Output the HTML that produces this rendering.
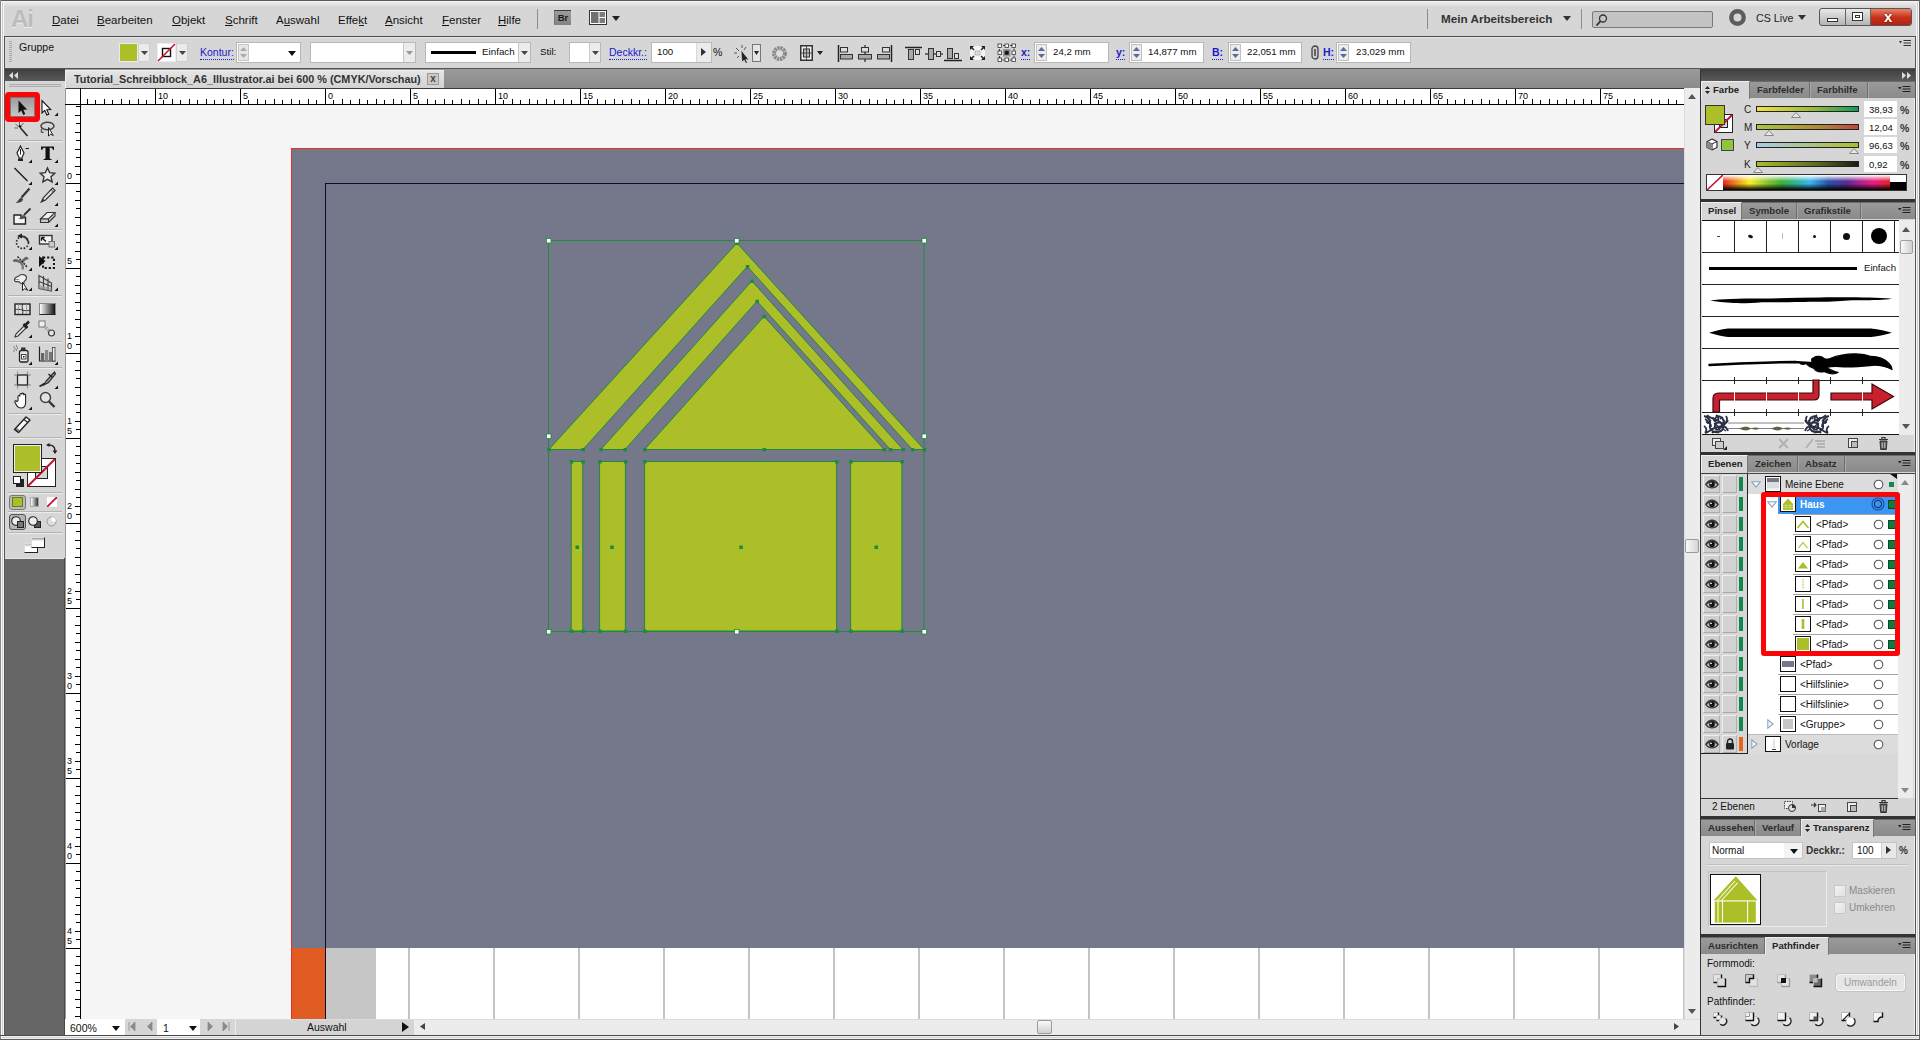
<!DOCTYPE html><html lang="de"><head><meta charset="utf-8"><title>Adobe Illustrator</title><style>
*{box-sizing:border-box;margin:0;padding:0}
html,body{width:1920px;height:1040px;overflow:hidden;background:#d6d6d6;font-family:"Liberation Sans",sans-serif;font-size:11px;color:#111}
#app{position:relative;width:1920px;height:1040px;overflow:hidden;background:#d6d6d6}
#app div,#app svg,#app span.a{position:absolute}
.t{white-space:nowrap;line-height:14px;font-size:11px;color:#111}
.m{white-space:nowrap;line-height:16px;font-size:11.5px;color:#111}
.fl::first-letter{text-decoration:underline;text-underline-offset:1px}
.tab{white-space:nowrap;line-height:14px;font-size:9.6px;font-weight:bold;color:#333}
.lnk{white-space:nowrap;line-height:14px;font-size:10.5px;color:#1a1ad0;border-bottom:1px dotted #1a1ad0}
.wb{background:#fff;border:1px solid #b8b8b8}
.r{font-size:9px;line-height:10px;color:#000;white-space:nowrap}
</style></head><body>
<div id="app">
<div style="left:0px;top:0px;width:1920px;height:1px;background:#5a5a5a"></div>
<div style="left:0px;top:1px;width:1920px;height:1px;background:#f2f2f2"></div>
<div style="left:0px;top:0px;width:1px;height:1040px;background:#8a8a8a"></div>
<div style="left:1px;top:1px;width:1px;height:1039px;background:#fafafa"></div>
<div style="left:2px;top:2px;width:1px;height:1038px;background:#cdcdcd"></div>
<div style="left:3px;top:2px;width:1px;height:1038px;background:#f6f6f6"></div>
<div style="left:4px;top:36px;width:1912px;height:1px;background:#4a4a4a"></div>
<div style="left:4px;top:36px;width:1px;height:1000px;background:#555"></div>
<div style="left:1915px;top:36px;width:1px;height:1000px;background:#555"></div>
<div style="left:1914px;top:37px;width:1px;height:998px;background:#f0f0f0"></div>
<div style="left:1916px;top:2px;width:1px;height:1038px;background:#f6f6f6"></div>
<div style="left:1917px;top:2px;width:1px;height:1038px;background:#cdcdcd"></div>
<div style="left:1918px;top:1px;width:1px;height:1039px;background:#fafafa"></div>
<div style="left:1919px;top:0px;width:1px;height:1040px;background:#666"></div>
<div style="left:0px;top:1035px;width:1920px;height:1px;background:#4a4a4a"></div>
<div style="left:1px;top:1036px;width:1918px;height:3px;background:#f0f0f0"></div>
<div style="left:2px;top:1037px;width:1916px;height:1px;background:#d4d4d4"></div>
<div style="left:0px;top:1039px;width:1920px;height:1px;background:#5a5a5a"></div>
<div style="left:4px;top:2px;width:1912px;height:5px;background:linear-gradient(#ececec,#d6d6d6)"></div>
<div class="t" style="left:11px;top:7px;font-size:24px;line-height:24px;font-weight:bold;color:#bcbcbc;letter-spacing:-1px;text-shadow:0 1px 0 #eee">Ai</div>
<div class="m fl" style="left:52px;top:12px;">Datei</div>
<div class="m fl" style="left:97px;top:12px;">Bearbeiten</div>
<div class="m fl" style="left:172px;top:12px;">Objekt</div>
<div class="m fl" style="left:225px;top:12px;">Schrift</div>
<div class="m" style="left:276px;top:12px;">Auswahl</div>
<div style="left:283.7px;top:25px;width:6.4px;height:1px;background:#222"></div>
<div class="m" style="left:338px;top:12px;">Effekt</div>
<div style="left:358.5px;top:25px;width:5.8px;height:1px;background:#222"></div>
<div class="m fl" style="left:385px;top:12px;">Ansicht</div>
<div class="m fl" style="left:442px;top:12px;">Fenster</div>
<div class="m fl" style="left:498px;top:12px;">Hilfe</div>
<div style="left:537px;top:9px;width:1px;height:20px;background:#8c8c8c"></div>
<div style="left:554px;top:10px;width:17px;height:15px;background:linear-gradient(#9c9c9c,#828282);border-top:1px solid #3a3a3a;border-left:1px solid #777;color:#1a1a1a;font-size:9.5px;font-weight:bold;line-height:13px;text-align:center">Br</div>
<svg style="left:589px;top:10px" width="18" height="15" viewBox="0 0 18 15"><rect x="0.5" y="0.5" width="17" height="14" fill="#fff" stroke="#333"/><rect x="2" y="2" width="7.5" height="11" fill="#707070"/><rect x="10.5" y="2" width="5.5" height="5" fill="#7c7c7c"/><rect x="10.5" y="8" width="5.5" height="5" fill="#7c7c7c"/></svg>
<svg style="left:612px;top:16px" width="8" height="5"><path d="M0 0h8l-4 5z" fill="#222"/></svg>
<div style="left:1427px;top:9px;width:1px;height:20px;background:#8c8c8c"></div>
<div class="t" style="left:1441px;top:11px;font-weight:bold;font-size:11.7px;color:#333;line-height:16px">Mein Arbeitsbereich</div>
<svg style="left:1563px;top:16px" width="8" height="5"><path d="M0 0h8l-4 5z" fill="#333"/></svg>
<div style="left:1581px;top:9px;width:1px;height:20px;background:#8c8c8c"></div>
<div style="left:1592px;top:11px;width:121px;height:17px;background:#c4c4c4;border:1px solid #7a7a7a;border-radius:2px"></div>
<svg style="left:1595px;top:13px" width="14" height="14" viewBox="0 0 14 14"><circle cx="8" cy="5.5" r="3.5" fill="none" stroke="#333" stroke-width="1.3"/><path d="M5.5 8.2L1.5 12.5" stroke="#333" stroke-width="1.8"/></svg>
<svg style="left:1727px;top:7px" width="21" height="21" viewBox="0 0 21 21"><circle cx="10.5" cy="10.5" r="6.2" fill="none" stroke="#5c5c5c" stroke-width="4.4"/></svg>
<div class="t" style="left:1756px;top:10px;font-size:10.7px;line-height:16px;color:#222">CS Live</div>
<svg style="left:1798px;top:15px" width="8" height="5"><path d="M0 0h8l-4 5z" fill="#333"/></svg>
<div style="left:1819px;top:8px;width:93px;height:18px;border:1px solid #555;border-radius:3px;background:linear-gradient(#e8e8e8,#b4b4b4);overflow:hidden">
<div style="left:25px;top:0px;width:1px;height:18px;background:#666"></div>
<div style="left:50px;top:0px;width:1px;height:18px;background:#666"></div>
<div style="left:51px;top:0px;width:41px;height:17px;background:linear-gradient(#e8836a,#c9301a 50%,#b02010)"></div>
<div style="left:7px;top:9px;width:11px;height:4px;background:#fff;border:1px solid #333"></div>
<div style="left:32px;top:3px;width:11px;height:9px;background:#fff;border:1px solid #333">
<div style="left:2px;top:2px;width:5px;height:3px;border:1px solid #333"></div></div>
<div class="t" style="left:64px;top:1px;font-weight:bold;font-size:15px;line-height:13px;color:#fff;text-shadow:0 0 2px #400">x</div></div>
<div style="left:5px;top:37px;width:1910px;height:32px;background:#d6d6d6"></div>
<div style="left:5px;top:37px;width:1910px;height:1px;background:#e8e8e8"></div>
<div style="left:9px;top:41px;width:3px;height:22px;background:repeating-linear-gradient(#a8a8a8 0 1px,transparent 1px 2px)"></div>
<div class="t" style="left:19px;top:40px;font-size:10.5px">Gruppe</div>
<div style="left:119px;top:43px;width:19px;height:19px;background:#acbe28;border:1px solid #ececec"></div>
<div style="left:138px;top:43px;width:12px;height:19px;background:#ebebeb;border:1px solid #cfcfcf"></div>
<svg style="left:141px;top:51px" width="7" height="4"><path d="M0 0h7l-3.5 4z" fill="#444"/></svg>
<div style="left:157px;top:43px;width:19px;height:19px;background:#fff;border:1px solid #ececec"></div>
<svg style="left:157px;top:43px" width="19" height="19" viewBox="0 0 19 19"><rect x="5.5" y="5.5" width="8" height="8" fill="#fff" stroke="#111" stroke-width="1.4"/><path d="M1 18L18 1" stroke="#d01030" stroke-width="1.6"/></svg>
<div style="left:176px;top:43px;width:12px;height:19px;background:#ebebeb;border:1px solid #cfcfcf"></div>
<svg style="left:179px;top:51px" width="7" height="4"><path d="M0 0h7l-3.5 4z" fill="#444"/></svg>
<div class="lnk" style="left:200px;top:45px;">Kontur:</div>
<div class="wb" style="left:236px;top:42px;width:65px;height:21px;"></div>
<div style="left:238px;top:44px;width:11px;height:17px;background:#e6e6e6;border:1px solid #c6c6c6"></div>
<svg style="left:240px;top:46px" width="7" height="13"><path d="M0 5h7l-3.5-4z M0 8h7l-3.5 4z" fill="#aaa"/></svg>
<svg style="left:288px;top:51px" width="8" height="5"><path d="M0 0h8l-4 5z" fill="#111"/></svg>
<div class="wb" style="left:310px;top:42px;width:106px;height:21px;"></div>
<div style="left:403px;top:43px;width:12px;height:19px;background:#ececec;border-left:1px solid #c8c8c8"></div>
<svg style="left:406px;top:51px" width="7" height="4"><path d="M0 0h7l-3.5 4z" fill="#999"/></svg>
<div class="wb" style="left:425px;top:42px;width:106px;height:21px;"></div>
<div style="left:431px;top:51px;width:45px;height:3px;background:#000"></div>
<div class="t" style="left:482px;top:45px;font-size:9.8px">Einfach</div>
<div style="left:518px;top:43px;width:12px;height:19px;background:#ececec;border-left:1px solid #c8c8c8"></div>
<svg style="left:521px;top:51px" width="7" height="4"><path d="M0 0h7l-3.5 4z" fill="#444"/></svg>
<div class="t" style="left:540px;top:45px;font-size:9.8px">Stil:</div>
<div class="wb" style="left:569px;top:42px;width:32px;height:21px;"></div>
<div style="left:589px;top:43px;width:11px;height:19px;background:#ececec;border-left:1px solid #c8c8c8"></div>
<svg style="left:592px;top:51px" width="7" height="4"><path d="M0 0h7l-3.5 4z" fill="#444"/></svg>
<div class="lnk" style="left:609px;top:45px;">Deckkr.:</div>
<div class="wb" style="left:651px;top:42px;width:61px;height:21px;"></div>
<div class="t" style="left:657px;top:45px;font-size:9.7px">100</div>
<div style="left:696px;top:43px;width:15px;height:19px;background:#ececec;border-left:1px solid #d8d8d8"></div>
<svg style="left:701px;top:48px" width="5" height="8"><path d="M0 0v8l5-4z" fill="#333"/></svg>
<div class="t" style="left:713px;top:45px;font-size:10.5px">%</div>
<svg style="left:733px;top:44px" width="30" height="19" viewBox="0 0 30 19"><g stroke="#555" stroke-width="1"><path d="M3 4l3 3M9 1v3M13 3l-2 3M1 9h3M4 14l2-2"/></g><path d="M8 6l8 10-3.2-.6 1.6 3.4-1.6.6-1.6-3.3-2.2 2z" fill="#222" stroke="#eee" stroke-width=".5"/><rect x="19.500" y=".5" width="8" height="17" fill="#e4e4e4" stroke="#777"/><path d="M21 7h5l-2.500 4z" fill="#222"/></svg>
<svg style="left:771px;top:45px" width="17" height="17" viewBox="0 0 17 17"><circle cx="8.5" cy="8.5" r="5.500" fill="none" stroke="#8a8a8a" stroke-width="4" stroke-dasharray="2.2 0.7"/><circle cx="8.5" cy="8.500" r="3" fill="#dcdcdc"/></svg>
<svg style="left:800px;top:45px" width="26" height="16" viewBox="0 0 26 16"><rect x=".75" y=".75" width="11.5" height="14.500" fill="#eee" stroke="#333" stroke-width="1.500"/><rect x="3.500" y="4" width="6" height="8" fill="#bbb" stroke="#333"/><path d="M6.500 0v16M0 8h13" stroke="#333" stroke-width=".8"/><path d="M17 6h6l-3 4z" fill="#222"/></svg>
<svg style="left:837px;top:45px" width="16" height="17" viewBox="0 0 16 17"><path d="M1.500 0v17" stroke="#222" stroke-width="1.500"/><rect x="3.500" y="2.500" width="7" height="4.500" fill="#ddd" stroke="#333"/><rect x="3.500" y="9.500" width="12" height="4.500" fill="#aaa" stroke="#333"/></svg>
<svg style="left:858px;top:45px" width="16" height="17" viewBox="0 0 16 17"><path d="M7 0v17" stroke="#222" stroke-width="1.200"/><rect x="3.500" y="2.500" width="7" height="4.500" fill="#ddd" stroke="#333"/><rect x=".5" y="9.500" width="13" height="4.500" fill="#aaa" stroke="#333"/></svg>
<svg style="left:877px;top:45px" width="16" height="17" viewBox="0 0 16 17"><path d="M14.500 0v17" stroke="#222" stroke-width="1.500"/><rect x="5.500" y="2.500" width="7" height="4.500" fill="#ddd" stroke="#333"/><rect x=".5" y="9.500" width="12" height="4.500" fill="#aaa" stroke="#333"/></svg>
<svg style="left:905px;top:46px" width="18" height="16" viewBox="0 0 18 16"><path d="M0 1.500h17" stroke="#222" stroke-width="1.500"/><rect x="3.500" y="3.500" width="5" height="10" fill="#aaa" stroke="#333"/><rect x="10.500" y="3.500" width="4" height="5" fill="#ddd" stroke="#333"/></svg>
<svg style="left:925px;top:46px" width="18" height="16" viewBox="0 0 18 16"><path d="M0 8h18" stroke="#222" stroke-width="1.200"/><rect x="3.500" y="2.500" width="5" height="11" fill="#aaa" stroke="#333"/><rect x="11.500" y="5.500" width="4" height="5" fill="#ddd" stroke="#333"/></svg>
<svg style="left:944px;top:46px" width="18" height="16" viewBox="0 0 18 16"><path d="M0 14.500h18" stroke="#222" stroke-width="1.500"/><rect x="3.500" y="2.500" width="5" height="10" fill="#aaa" stroke="#333"/><rect x="10.500" y="7.500" width="4" height="5" fill="#ddd" stroke="#333"/></svg>
<svg style="left:970px;top:46px" width="15" height="14" viewBox="0 0 15 14"><rect width="15" height="14" fill="#f4f4f4"/><path d="M0 0h4l-1.500 1.500 2 2-1 1-2-2L0 4zM15 0v4l-1.500-1.500-2 2-1-1 2-2L11 0zM0 14v-4l1.500 1.500 2-2 1 1-2 2L4 14zM15 14h-4l1.500-1.500-2-2 1-1 2 2L15 10z" fill="#222"/><rect x="5" y="5" width="5" height="4" fill="#ddd" stroke="#999" stroke-width=".6"/></svg>
<svg style="left:997px;top:43px" width="20" height="20" viewBox="0 0 20 20"><rect x="2.500" y="2.500" width="14.500" height="14.500" fill="none" stroke="#333" stroke-dasharray="2 1.500"/><rect x="6" y="6" width="7.500" height="7.500" fill="#999"/><rect x="1" y="1" width="3.500" height="3.500" fill="#fff" stroke="#333" stroke-width=".8"/><rect x="1" y="8" width="3.500" height="3.500" fill="#fff" stroke="#333" stroke-width=".8"/><rect x="1" y="15" width="3.500" height="3.500" fill="#fff" stroke="#333" stroke-width=".8"/><rect x="8" y="1" width="3.500" height="3.500" fill="#fff" stroke="#333" stroke-width=".8"/><rect x="8" y="8" width="3.500" height="3.500" fill="#111" stroke="#333" stroke-width=".8"/><rect x="8" y="15" width="3.500" height="3.500" fill="#fff" stroke="#333" stroke-width=".8"/><rect x="15" y="1" width="3.500" height="3.500" fill="#fff" stroke="#333" stroke-width=".8"/><rect x="15" y="8" width="3.500" height="3.500" fill="#fff" stroke="#333" stroke-width=".8"/><rect x="15" y="15" width="3.500" height="3.500" fill="#fff" stroke="#333" stroke-width=".8"/></svg>
<div class="lnk" style="left:1021px;top:45px;font-weight:bold">x:</div>
<div class="wb" style="left:1034px;top:42px;width:75px;height:21px;"></div>
<div style="left:1036px;top:44px;width:11px;height:17px;background:#ececec;border:1px solid #c0c0c0"></div>
<svg style="left:1038px;top:46px" width="7" height="13"><path d="M0 5h7l-3.500-4z M0 8h7l-3.500 4z" fill="#5a6a9a"/></svg>
<div class="t" style="left:1053px;top:45px;font-size:9.7px">24,2 mm</div>
<div class="lnk" style="left:1116px;top:45px;font-weight:bold">y:</div>
<div class="wb" style="left:1129px;top:42px;width:75px;height:21px;"></div>
<div style="left:1131px;top:44px;width:11px;height:17px;background:#ececec;border:1px solid #c0c0c0"></div>
<svg style="left:1133px;top:46px" width="7" height="13"><path d="M0 5h7l-3.500-4z M0 8h7l-3.500 4z" fill="#5a6a9a"/></svg>
<div class="t" style="left:1148px;top:45px;font-size:9.7px">14,877 mm</div>
<div class="lnk" style="left:1212px;top:45px;font-weight:bold">B:</div>
<div class="wb" style="left:1228px;top:42px;width:74px;height:21px;"></div>
<div style="left:1230px;top:44px;width:11px;height:17px;background:#ececec;border:1px solid #c0c0c0"></div>
<svg style="left:1232px;top:46px" width="7" height="13"><path d="M0 5h7l-3.500-4z M0 8h7l-3.500 4z" fill="#5a6a9a"/></svg>
<div class="t" style="left:1247px;top:45px;font-size:9.7px">22,051 mm</div>
<svg style="left:1311px;top:45px" width="8" height="15" viewBox="0 0 8 15"><rect x="1" y="1" width="6" height="13" rx="3" fill="#ccc" stroke="#444" stroke-width="1.300"/><path d="M4 4v7" stroke="#444" stroke-width="1.500"/></svg>
<div class="lnk" style="left:1323px;top:45px;font-weight:bold">H:</div>
<div class="wb" style="left:1336px;top:42px;width:75px;height:21px;"></div>
<div style="left:1338px;top:44px;width:11px;height:17px;background:#ececec;border:1px solid #c0c0c0"></div>
<svg style="left:1340px;top:46px" width="7" height="13"><path d="M0 5h7l-3.500-4z M0 8h7l-3.500 4z" fill="#5a6a9a"/></svg>
<div class="t" style="left:1356px;top:45px;font-size:9.7px">23,029 mm</div>
<svg style="left:1899px;top:40px" width="12" height="8" viewBox="0 0 12 8"><path d="M0 1h3l-1.500 2.500z" fill="#333"/><path d="M4.500 .5h7.500M4.500 3h7.500M4.500 5.500h7.500" stroke="#333" stroke-width="1"/></svg>
<div style="left:5px;top:68px;width:1910px;height:21px;background:linear-gradient(#9a9a9a,#8a8a8a);border-top:1px solid #555;border-bottom:1px solid #3a3a3a"></div>
<div style="left:5px;top:69px;width:60px;height:12px;background:linear-gradient(#3e3e3e,#5a5a5a)"></div>
<svg style="left:9px;top:72px" width="9" height="7"><path d="M4 0v7L0 3.500zM9 0v7L5 3.500z" fill="#ddd"/></svg>
<div style="left:65px;top:70px;width:379px;height:19px;background:linear-gradient(#e4e4e4,#d2d2d2);border-top:1px solid #f0f0f0;border-left:1px solid #f0f0f0"></div>
<div class="tab" style="left:74px;top:72px;font-size:10.85px">Tutorial_Schreibblock_A6_Illustrator.ai bei 600 % (CMYK/Vorschau)</div>
<div style="left:427px;top:73px;width:12px;height:12px;background:#c8c8c8;border:1px solid #9a9a9a;font-size:10px;line-height:9px;text-align:center;color:#444;font-weight:bold">x</div>
<div style="left:1700px;top:69px;width:215px;height:12px;background:linear-gradient(#3e3e3e,#5a5a5a)"></div>
<svg style="left:1902px;top:72px" width="9" height="7"><path d="M0 0v7l4-3.500zM5 0v7l4-3.500z" fill="#ddd"/></svg>
<div style="left:65px;top:88px;width:1619px;height:17px;background:#fff"></div>
<div style="left:65px;top:88px;width:16px;height:931px;background:#fff"></div>
<div style="left:65px;top:88px;width:1619px;height:1px;background:#3a3a3a"></div>
<div style="left:65px;top:88px;width:1px;height:931px;background:#9a9a9a"></div>
<svg style="left:65px;top:88px" width="1619" height="931" viewBox="65 88 1619 931" shape-rendering="crispEdges"><path d="M65 104.500H1684M80.500 88V1019" stroke="#000" stroke-width="1" fill="none"/><path d="M87.5 99V104M95.5 100V104M104.5 99V104M112.5 100V104M121.5 99V104M129.5 100V104M138.5 99V104M146.5 100V104M155.5 89V104M163.5 100V104M172.5 99V104M180.5 100V104M189.5 99V104M197.5 100V104M206.5 99V104M214.5 100V104M223.5 99V104M231.5 100V104M240.5 89V104M248.5 100V104M257.5 99V104M265.5 100V104M274.5 99V104M282.5 100V104M291.5 99V104M299.5 100V104M308.5 99V104M316.5 100V104M325.5 89V104M333.5 100V104M342.5 99V104M350.5 100V104M359.5 99V104M367.5 100V104M376.5 99V104M384.5 100V104M393.5 99V104M401.5 100V104M410.5 89V104M418.5 100V104M427.5 99V104M435.5 100V104M444.5 99V104M452.5 100V104M461.5 99V104M469.5 100V104M478.5 99V104M486.5 100V104M495.5 89V104M503.5 100V104M512.5 99V104M520.5 100V104M529.5 99V104M537.5 100V104M546.5 99V104M554.5 100V104M563.5 99V104M571.5 100V104M580.5 89V104M588.5 100V104M597.5 99V104M605.5 100V104M614.5 99V104M622.5 100V104M631.5 99V104M639.5 100V104M648.5 99V104M656.5 100V104M665.5 89V104M673.5 100V104M682.5 99V104M690.5 100V104M699.5 99V104M707.5 100V104M716.5 99V104M724.5 100V104M733.5 99V104M741.5 100V104M750.5 89V104M758.5 100V104M767.5 99V104M775.5 100V104M784.5 99V104M792.5 100V104M801.5 99V104M809.5 100V104M818.5 99V104M826.5 100V104M835.5 89V104M843.5 100V104M852.5 99V104M860.5 100V104M869.5 99V104M877.5 100V104M886.5 99V104M894.5 100V104M903.5 99V104M911.5 100V104M920.5 89V104M928.5 100V104M937.5 99V104M945.5 100V104M954.5 99V104M962.5 100V104M971.5 99V104M979.5 100V104M988.5 99V104M996.5 100V104M1005.5 89V104M1013.5 100V104M1022.5 99V104M1030.5 100V104M1039.5 99V104M1047.5 100V104M1056.5 99V104M1064.5 100V104M1073.5 99V104M1081.5 100V104M1090.5 89V104M1098.5 100V104M1107.5 99V104M1115.5 100V104M1124.5 99V104M1132.5 100V104M1141.5 99V104M1149.5 100V104M1158.5 99V104M1166.5 100V104M1175.5 89V104M1183.5 100V104M1192.5 99V104M1200.5 100V104M1209.5 99V104M1217.5 100V104M1226.5 99V104M1234.5 100V104M1243.5 99V104M1251.5 100V104M1260.5 89V104M1268.5 100V104M1277.5 99V104M1285.5 100V104M1294.5 99V104M1302.5 100V104M1311.5 99V104M1319.5 100V104M1328.5 99V104M1336.5 100V104M1345.5 89V104M1353.5 100V104M1362.5 99V104M1370.5 100V104M1379.5 99V104M1387.5 100V104M1396.5 99V104M1404.5 100V104M1413.5 99V104M1421.5 100V104M1430.5 89V104M1438.5 100V104M1447.5 99V104M1455.5 100V104M1464.5 99V104M1472.5 100V104M1481.5 99V104M1489.5 100V104M1498.5 99V104M1506.5 100V104M1515.5 89V104M1523.5 100V104M1532.5 99V104M1540.5 100V104M1549.5 99V104M1557.5 100V104M1566.5 99V104M1574.5 100V104M1583.5 99V104M1591.5 100V104M1600.5 89V104M1608.5 100V104M1617.5 99V104M1625.5 100V104M1634.5 99V104M1642.5 100V104M1651.5 99V104M1659.5 100V104M1668.5 99V104M1676.5 100V104M76 106.5H80M75 115.5H80M76 123.5H80M75 132.5H80M76 140.5H80M75 149.5H80M76 157.5H80M75 166.5H80M76 174.5H80M66 183.5H80M76 191.5H80M75 200.5H80M76 208.5H80M75 217.5H80M76 225.5H80M75 234.5H80M76 242.5H80M75 251.5H80M76 259.5H80M66 268.5H80M76 276.5H80M75 285.5H80M76 293.5H80M75 302.5H80M76 310.5H80M75 319.5H80M76 327.5H80M75 336.5H80M76 344.5H80M66 353.5H80M76 361.5H80M75 370.5H80M76 378.5H80M75 387.5H80M76 395.5H80M75 404.5H80M76 412.5H80M75 421.5H80M76 429.5H80M66 438.5H80M76 446.5H80M75 455.5H80M76 463.5H80M75 472.5H80M76 480.5H80M75 489.5H80M76 497.5H80M75 506.5H80M76 514.5H80M66 523.5H80M76 531.5H80M75 540.5H80M76 548.5H80M75 557.5H80M76 565.5H80M75 574.5H80M76 582.5H80M75 591.5H80M76 599.5H80M66 608.5H80M76 616.5H80M75 625.5H80M76 633.5H80M75 642.5H80M76 650.5H80M75 659.5H80M76 667.5H80M75 676.5H80M76 684.5H80M66 693.5H80M76 701.5H80M75 710.5H80M76 718.5H80M75 727.5H80M76 735.5H80M75 744.5H80M76 752.5H80M75 761.5H80M76 769.5H80M66 778.5H80M76 786.5H80M75 795.5H80M76 803.5H80M75 812.5H80M76 820.5H80M75 829.5H80M76 837.5H80M75 846.5H80M76 854.5H80M66 863.5H80M76 871.5H80M75 880.5H80M76 888.5H80M75 897.5H80M76 905.5H80M75 914.5H80M76 922.5H80M75 931.5H80M76 939.5H80M66 948.5H80M76 956.5H80M75 965.5H80M76 973.5H80M75 982.5H80M76 990.5H80M75 999.5H80M76 1007.5H80M75 1016.5H80" stroke="#000" stroke-width="1" fill="none"/></svg>
<div class="r" style="left:158px;top:91px;">10</div>
<div class="r" style="left:243px;top:91px;">5</div>
<div class="r" style="left:328px;top:91px;">0</div>
<div class="r" style="left:413px;top:91px;">5</div>
<div class="r" style="left:498px;top:91px;">10</div>
<div class="r" style="left:583px;top:91px;">15</div>
<div class="r" style="left:668px;top:91px;">20</div>
<div class="r" style="left:753px;top:91px;">25</div>
<div class="r" style="left:838px;top:91px;">30</div>
<div class="r" style="left:923px;top:91px;">35</div>
<div class="r" style="left:1008px;top:91px;">40</div>
<div class="r" style="left:1093px;top:91px;">45</div>
<div class="r" style="left:1178px;top:91px;">50</div>
<div class="r" style="left:1263px;top:91px;">55</div>
<div class="r" style="left:1348px;top:91px;">60</div>
<div class="r" style="left:1433px;top:91px;">65</div>
<div class="r" style="left:1518px;top:91px;">70</div>
<div class="r" style="left:1603px;top:91px;">75</div>
<div class="r" style="left:67px;top:171px;">0</div>
<div class="r" style="left:67px;top:256px;">5</div>
<div class="r" style="left:67px;top:331px;">1</div>
<div class="r" style="left:67px;top:341px;">0</div>
<div class="r" style="left:67px;top:416px;">1</div>
<div class="r" style="left:67px;top:426px;">5</div>
<div class="r" style="left:67px;top:501px;">2</div>
<div class="r" style="left:67px;top:511px;">0</div>
<div class="r" style="left:67px;top:586px;">2</div>
<div class="r" style="left:67px;top:596px;">5</div>
<div class="r" style="left:67px;top:671px;">3</div>
<div class="r" style="left:67px;top:681px;">0</div>
<div class="r" style="left:67px;top:756px;">3</div>
<div class="r" style="left:67px;top:766px;">5</div>
<div class="r" style="left:67px;top:841px;">4</div>
<div class="r" style="left:67px;top:851px;">0</div>
<div class="r" style="left:67px;top:926px;">4</div>
<div class="r" style="left:67px;top:936px;">5</div>
<div style="left:81px;top:105px;width:1603px;height:914px;background:#f5f5f5;overflow:hidden">
<div style="left:210px;top:43px;width:1400px;height:800px;background:#75788b;border-top:1.500px solid #e8302a;border-left:1.500px solid #e8302a"></div>
<div style="left:210px;top:843px;width:34px;height:72px;background:#e05c22;border-left:1.500px solid #e8302a"></div>
<div style="left:245px;top:843px;width:50px;height:72px;background:#c6c6c6"></div>
<div style="left:295px;top:843px;width:1310px;height:72px;background:#fff"></div>
<div style="left:244px;top:78px;width:1px;height:840px;background:#0c0c2c"></div>
<div style="left:244px;top:78px;width:1360px;height:1px;background:#0c0c2c"></div>
<div style="left:327px;top:843px;width:1.5px;height:72px;background:#c4c4c4"></div>
<div style="left:412px;top:843px;width:1.5px;height:72px;background:#c4c4c4"></div>
<div style="left:497px;top:843px;width:1.5px;height:72px;background:#c4c4c4"></div>
<div style="left:582px;top:843px;width:1.5px;height:72px;background:#c4c4c4"></div>
<div style="left:667px;top:843px;width:1.5px;height:72px;background:#c4c4c4"></div>
<div style="left:752px;top:843px;width:1.5px;height:72px;background:#c4c4c4"></div>
<div style="left:837px;top:843px;width:1.5px;height:72px;background:#c4c4c4"></div>
<div style="left:922px;top:843px;width:1.5px;height:72px;background:#c4c4c4"></div>
<div style="left:1007px;top:843px;width:1.5px;height:72px;background:#c4c4c4"></div>
<div style="left:1092px;top:843px;width:1.5px;height:72px;background:#c4c4c4"></div>
<div style="left:1177px;top:843px;width:1.5px;height:72px;background:#c4c4c4"></div>
<div style="left:1262px;top:843px;width:1.5px;height:72px;background:#c4c4c4"></div>
<div style="left:1347px;top:843px;width:1.5px;height:72px;background:#c4c4c4"></div>
<div style="left:1432px;top:843px;width:1.5px;height:72px;background:#c4c4c4"></div>
<div style="left:1517px;top:843px;width:1.5px;height:72px;background:#c4c4c4"></div>
<div style="left:1602px;top:843px;width:1.5px;height:72px;background:#c4c4c4"></div></div>
<svg style="left:500px;top:220px" width="460" height="440" viewBox="500 220 460 440"><rect x="548.500" y="240.500" width="375.500" height="391" fill="none" stroke="#1f8a3e" stroke-width="1"/><path d="M736.900 243L548.800 449.500H583L747.300 266.500L912.300 449.500H924.200Z" fill="#acbe28" stroke="#1f8a3e" stroke-width="1"/><path d="M751.900 281L600.800 449.500H625L757 301.200L890.300 449.500H903Z" fill="#acbe28" stroke="#1f8a3e" stroke-width="1"/><path d="M764.100 316.400L644.600 449.500H884.100Z" fill="#acbe28" stroke="#1f8a3e" stroke-width="1"/><path d="M571.200 461.500H582.800V631H571.200Z" fill="#acbe28" stroke="#1f8a3e" stroke-width="1"/><path d="M599.600 461.500H625.400V631H599.600Z" fill="#acbe28" stroke="#1f8a3e" stroke-width="1"/><path d="M644.600 461.500H836.600V631H644.600Z" fill="#acbe28" stroke="#1f8a3e" stroke-width="1"/><path d="M850.600 461.500H901.900V631H850.600Z" fill="#acbe28" stroke="#1f8a3e" stroke-width="1"/><rect x="735.4" y="241.5" width="3.500" height="3.500" fill="#1f8a3e"/><rect x="547.3" y="448.0" width="3.500" height="3.500" fill="#1f8a3e"/><rect x="581.5" y="448.0" width="3.500" height="3.500" fill="#1f8a3e"/><rect x="745.8" y="265.0" width="3.500" height="3.500" fill="#1f8a3e"/><rect x="910.8" y="448.0" width="3.500" height="3.500" fill="#1f8a3e"/><rect x="922.7" y="448.0" width="3.500" height="3.500" fill="#1f8a3e"/><rect x="750.4" y="279.5" width="3.500" height="3.500" fill="#1f8a3e"/><rect x="599.3" y="448.0" width="3.500" height="3.500" fill="#1f8a3e"/><rect x="623.5" y="448.0" width="3.500" height="3.500" fill="#1f8a3e"/><rect x="755.5" y="299.7" width="3.500" height="3.500" fill="#1f8a3e"/><rect x="888.8" y="448.0" width="3.500" height="3.500" fill="#1f8a3e"/><rect x="901.5" y="448.0" width="3.500" height="3.500" fill="#1f8a3e"/><rect x="762.6" y="314.9" width="3.500" height="3.500" fill="#1f8a3e"/><rect x="643.1" y="448.0" width="3.500" height="3.500" fill="#1f8a3e"/><rect x="882.6" y="448.0" width="3.500" height="3.500" fill="#1f8a3e"/><rect x="762.6" y="448.0" width="3.500" height="3.500" fill="#1f8a3e"/><rect x="569.7" y="460.0" width="3.500" height="3.500" fill="#1f8a3e"/><rect x="581.3" y="460.0" width="3.500" height="3.500" fill="#1f8a3e"/><rect x="569.7" y="629.5" width="3.500" height="3.500" fill="#1f8a3e"/><rect x="581.3" y="629.5" width="3.500" height="3.500" fill="#1f8a3e"/><rect x="598.1" y="460.0" width="3.500" height="3.500" fill="#1f8a3e"/><rect x="623.9" y="460.0" width="3.500" height="3.500" fill="#1f8a3e"/><rect x="598.1" y="629.5" width="3.500" height="3.500" fill="#1f8a3e"/><rect x="623.9" y="629.5" width="3.500" height="3.500" fill="#1f8a3e"/><rect x="643.1" y="460.0" width="3.500" height="3.500" fill="#1f8a3e"/><rect x="835.1" y="460.0" width="3.500" height="3.500" fill="#1f8a3e"/><rect x="643.1" y="629.5" width="3.500" height="3.500" fill="#1f8a3e"/><rect x="835.1" y="629.5" width="3.500" height="3.500" fill="#1f8a3e"/><rect x="849.1" y="460.0" width="3.500" height="3.500" fill="#1f8a3e"/><rect x="900.4" y="460.0" width="3.500" height="3.500" fill="#1f8a3e"/><rect x="849.1" y="629.5" width="3.500" height="3.500" fill="#1f8a3e"/><rect x="900.4" y="629.5" width="3.500" height="3.500" fill="#1f8a3e"/><rect x="575.5" y="545.5" width="3.500" height="3.500" fill="#1f8a3e"/><rect x="610.3" y="545.5" width="3.500" height="3.500" fill="#1f8a3e"/><rect x="739.3" y="545.5" width="3.500" height="3.500" fill="#1f8a3e"/><rect x="874.5" y="545.5" width="3.500" height="3.500" fill="#1f8a3e"/><rect x="546.5" y="238.5" width="4.500" height="4.500" fill="#fff" stroke="#1f8a3e" stroke-width=".8"/><rect x="734.5" y="238.5" width="4.500" height="4.500" fill="#fff" stroke="#1f8a3e" stroke-width=".8"/><rect x="922.0" y="238.5" width="4.500" height="4.500" fill="#fff" stroke="#1f8a3e" stroke-width=".8"/><rect x="546.5" y="434.0" width="4.500" height="4.500" fill="#fff" stroke="#1f8a3e" stroke-width=".8"/><rect x="922.0" y="434.0" width="4.500" height="4.500" fill="#fff" stroke="#1f8a3e" stroke-width=".8"/><rect x="546.5" y="629.5" width="4.500" height="4.500" fill="#fff" stroke="#1f8a3e" stroke-width=".8"/><rect x="734.5" y="629.5" width="4.500" height="4.500" fill="#fff" stroke="#1f8a3e" stroke-width=".8"/><rect x="922.0" y="629.5" width="4.500" height="4.500" fill="#fff" stroke="#1f8a3e" stroke-width=".8"/></svg>
<div style="left:1684px;top:88px;width:16px;height:931px;background:#ececec;border-left:1px solid #dcdcdc"></div>
<svg style="left:1688px;top:94px" width="8" height="5"><path d="M0 5h8l-4-5z" fill="#555"/></svg>
<svg style="left:1688px;top:1009px" width="8" height="5"><path d="M0 0h8l-4 5z" fill="#555"/></svg>
<div style="left:1685px;top:539px;width:14px;height:14px;background:linear-gradient(90deg,#fafafa,#d4d4d4);border:1px solid #9a9a9a;border-radius:2px"></div>
<div style="left:65px;top:1019px;width:1635px;height:16px;background:#ececec;border-top:1px solid #dcdcdc"></div>
<div style="left:65px;top:1019px;width:60px;height:16px;background:#fff"></div>
<div class="t" style="left:70px;top:1021px;font-size:10.5px">600%</div>
<svg style="left:112px;top:1026px" width="8" height="5"><path d="M0 0h8l-4 5z" fill="#111"/></svg>
<div style="left:125px;top:1019px;width:110px;height:16px;background:#d6d6d6"></div>
<svg style="left:128px;top:1022px" width="28" height="9" viewBox="0 0 28 9"><path d="M1 0v9M7 0v9L2.500 4.500zM24 0v9L19.500 4.500z" fill="#8a8a8a" stroke="#8a8a8a" stroke-width=".8"/></svg>
<div style="left:157px;top:1019px;width:43px;height:16px;background:#fff"></div>
<div class="t" style="left:163px;top:1021px;font-size:10.5px">1</div>
<svg style="left:189px;top:1026px" width="8" height="5"><path d="M0 0h8l-4 5z" fill="#111"/></svg>
<svg style="left:206px;top:1022px" width="28" height="9" viewBox="0 0 28 9"><path d="M2 0v9l4.500-4.500zM17 0v9l4.500-4.500zM23 0v9" fill="#8a8a8a" stroke="#8a8a8a" stroke-width=".8"/></svg>
<div style="left:236px;top:1020px;width:178px;height:15px;background:#d4d4d4"></div>
<div class="t" style="left:307px;top:1020px;font-size:10.5px">Auswahl</div>
<svg style="left:402px;top:1022px" width="7" height="10"><path d="M0 0v10l7-5z" fill="#111"/></svg>
<svg style="left:420px;top:1023px" width="5" height="7"><path d="M5 0v7L0 3.500z" fill="#444"/></svg>
<svg style="left:1674px;top:1023px" width="5" height="7"><path d="M0 0v7L5 3.500z" fill="#444"/></svg>
<div style="left:1037px;top:1020px;width:15px;height:14px;background:linear-gradient(#fafafa,#d0d0d0);border:1px solid #9a9a9a;border-radius:2px"></div>
<div style="left:5px;top:81px;width:60px;height:477px;background:#d6d6d6"></div>
<div style="left:64px;top:558px;width:1px;height:477px;background:#484848"></div>
<div style="left:5px;top:558px;width:59px;height:477px;background:#666"></div>
<div style="left:5px;top:558px;width:59px;height:1px;background:#e4e4e4"></div>
<div style="left:9px;top:84px;width:52px;height:3px;background:repeating-linear-gradient(#aaa 0 1px,transparent 1px 2px)"></div>
<div style="left:8px;top:140px;width:54px;height:1px;background:#b4b4b4"></div>
<div style="left:8px;top:141px;width:54px;height:1px;background:#ececec"></div>
<div style="left:8px;top:229px;width:54px;height:1px;background:#b4b4b4"></div>
<div style="left:8px;top:230px;width:54px;height:1px;background:#ececec"></div>
<div style="left:8px;top:295px;width:54px;height:1px;background:#b4b4b4"></div>
<div style="left:8px;top:296px;width:54px;height:1px;background:#ececec"></div>
<div style="left:8px;top:341px;width:54px;height:1px;background:#b4b4b4"></div>
<div style="left:8px;top:342px;width:54px;height:1px;background:#ececec"></div>
<div style="left:8px;top:367px;width:54px;height:1px;background:#b4b4b4"></div>
<div style="left:8px;top:368px;width:54px;height:1px;background:#ececec"></div>
<div style="left:8px;top:413px;width:54px;height:1px;background:#b4b4b4"></div>
<div style="left:8px;top:414px;width:54px;height:1px;background:#ececec"></div>
<div style="left:8px;top:437px;width:54px;height:1px;background:#b4b4b4"></div>
<div style="left:8px;top:438px;width:54px;height:1px;background:#ececec"></div>
<div style="left:8px;top:492px;width:54px;height:1px;background:#b4b4b4"></div>
<div style="left:8px;top:493px;width:54px;height:1px;background:#ececec"></div>
<div style="left:8px;top:511px;width:54px;height:1px;background:#b4b4b4"></div>
<div style="left:8px;top:512px;width:54px;height:1px;background:#ececec"></div>
<div style="left:8px;top:532px;width:54px;height:1px;background:#b4b4b4"></div>
<div style="left:8px;top:533px;width:54px;height:1px;background:#ececec"></div>
<div style="left:5px;top:92px;width:35px;height:30px;border:5px solid #fb0509;border-radius:4px;background:linear-gradient(#9a9a9a,#c8c8c8);box-shadow:inset 0 0 0 1px #777"></div>
<svg style="left:0;top:0" width="66" height="560" viewBox="0 0 66 560"><g transform="translate(22.5 108)"><path d="M-4-7.500V5l2.800-2.600 2 4.600 2-.9-2-4.400 3.900-.2z" fill="#111"/></g><g transform="translate(47.5 108)"><path d="M-4-7.500V5l2.800-2.600 2 4.600 2-.9-2-4.400 3.900-.2z" fill="#fff" stroke="#111" stroke-width="1.100" transform="translate(-1.500 0)"/></g><path d="M58 112.5v3.500h-3.500z" fill="#111"/><g transform="translate(22.5 129)"><path d="M-2-1l7 8" stroke="#333" stroke-width="1.800"/><path d="M-7-5l3 2.500M-3-8v4M1-6l-2.500 3M-8-1h3.500" stroke="#666" stroke-width="1"/><path d="M-3.500-3.500l2 2" stroke="#111" stroke-width="2.200"/></g><g transform="translate(47.5 129)"><ellipse cx="0" cy="-3" rx="6.500" ry="3.800" fill="none" stroke="#444" stroke-width="1.500"/><path d="M-5.500-.5c-2 2.500-.5 5 1.500 3.500" fill="none" stroke="#444" stroke-width="1.200"/><path d="M1-1.500v8.500l2.200-1.800 2.600 1.300z" fill="#fff" stroke="#222" stroke-width="1"/></g><g transform="translate(22.5 154)"><path d="M-2-8l-3.500 7 2.200 5h2.600l2.200-5z" fill="#fff" stroke="#222" stroke-width="1.200"/><path d="M-2-5v5.500" stroke="#222"/><rect x="-4.500" y="4.500" width="5" height="2.500" fill="#222"/><path d="M3-5.500h3.500" stroke="#222" stroke-width="1.100"/></g><path d="M32 159.5v3.500h-3.500z" fill="#111"/><g transform="translate(47.5 153)"><path d="M-6.500-6.500h13v3.600h-1c-.3-1.700-1-2.300-3.300-2.300V4.700c0 .9.500 1.200 1.900 1.300V7H-3.900V6c1.400-.1 1.900-.4 1.900-1.300V-5.200c-2.300 0-3 .6-3.300 2.300h-1z" fill="#111"/></g><path d="M58 159.5v3.500h-3.500z" fill="#111"/><g transform="translate(22.5 175)"><path d="M-8-7l13 13" stroke="#222" stroke-width="1.500"/></g><path d="M32 181.5v3.500h-3.500z" fill="#111"/><g transform="translate(47.5 175)"><path d="M0-7l2.200 4.700 5.100.6-3.800 3.500 1.100 5.100L0 4.300l-4.600 2.600 1.100-5.100-3.800-3.500 5.100-.6z" fill="#e8e8e8" stroke="#333" stroke-width="1.400"/></g><path d="M58 181.5v3.500h-3.500z" fill="#111"/><g transform="translate(22.5 196)"><path d="M7-7.500l-8 9" stroke="#333" stroke-width="2.200"/><path d="M-1 1.500c-3 .8-3 4.200-6 5 3.500 1 7.500-.8 7.500-3.500z" fill="#444"/></g><g transform="translate(47.5 196)"><path d="M5-8l2.500 2.500-9.500 9.500-4.200 2 2-4.200z" fill="#e4e4e4" stroke="#333" stroke-width="1.200"/><path d="M-6.200 6l1.600-3.400 1.800 1.800z" fill="#333"/><path d="M3.500-6.500l2.500 2.500" stroke="#333"/></g><path d="M58 202.5v3.500h-3.500z" fill="#111"/><g transform="translate(22.5 217)"><path d="M-8.500-2h7v2.500h4.500V7h-11.500z" fill="#f4f4f4" stroke="#222" stroke-width="1.400"/><path d="M8-8.500l-6.500 6.500" stroke="#333" stroke-width="1.800"/><path d="M1.500-2c-3 0-3 3.500-5.500 3.500 2.500 1.800 7 0 7-2.500z" fill="#555"/></g><g transform="translate(47.5 217)"><path d="M-7 2l6.500-6.500h8L1 2z" fill="#f0f0f0" stroke="#333" stroke-width="1.100"/><path d="M-7 2v3.500h8V2zM1 5.500l6.500-6.500v-3.500" fill="#c8c8c8" stroke="#333" stroke-width="1.100"/></g><path d="M58 223.5v3.500h-3.500z" fill="#111"/><g transform="translate(22.5 242.5)"><circle cx="0" cy="0" r="6" fill="none" stroke="#333" stroke-width="1.700" stroke-dasharray="1.700 1.500"/><path d="M-1-6c3-.3 6 2 6.500 5" fill="none" stroke="#333" stroke-width="1.800"/><path d="M-5.500-6.500l5-2.500v5z" fill="#222"/></g><path d="M32 246.5v3.500h-3.500z" fill="#111"/><g transform="translate(47.5 240)"><rect x="-8" y="-4.500" width="12.500" height="8.500" fill="#f4f4f4" stroke="#333" stroke-width="1.400"/><rect x="1.500" y="1.500" width="5.500" height="5.500" fill="#ccc" stroke="#666" stroke-width=".9"/><path d="M-6-2.500l4.500 4M-6-2.500v3.200M-6-2.500h3.200" stroke="#111" stroke-width="1.300" fill="none"/></g><path d="M58 246.5v3.500h-3.500z" fill="#111"/><g transform="translate(22.5 262.5)"><path d="M-9-1c3-4 6 3 9 0s4-5 5-2" fill="none" stroke="#666" stroke-width="2.600"/><path d="M-5-6l10 11" stroke="#333" stroke-width="1.600" stroke-dasharray="2 1"/><path d="M-2 0c2 2 3 4 2 7" fill="none" stroke="#777" stroke-width="2.200"/></g><path d="M32 267.5v3.500h-3.500z" fill="#111"/><g transform="translate(47.5 262.5)"><rect x="-4.500" y="-5" width="11" height="10.500" fill="none" stroke="#111" stroke-width="1.900" stroke-dasharray="2.200 1.900"/><path d="M-8.500-6.500v11l6.500-6z" fill="#111"/></g><g transform="translate(22.5 282)"><path d="M-8-2c0-4 4-3 5-4.500s7-1.500 7 2-3 3-2.500 5-3 2-4 0-5.500.5-5.500-2.500z" fill="#f0f0f0" stroke="#444" stroke-width="1.200"/><path d="M-7-2.500h4" stroke="#444" stroke-dasharray="1 1"/><path d="M0 0v8.500l2.200-1.800 3 1.600z" fill="#fff" stroke="#222" stroke-width="1"/></g><path d="M32 287.5v3.500h-3.500z" fill="#111"/><g transform="translate(47.5 283)"><path d="M-8.500-7.500v13l12.500 2.500V0zM-4-7v13M.5-4.500v12M-8.500-1.500l12.500 5" fill="none" stroke="#444" stroke-width="1.200"/><path d="M-8.500 2l12.500 3.500v2.500l-12.500-2.500z" fill="#999" opacity=".7"/></g><path d="M58 287.5v3.500h-3.500z" fill="#111"/><g transform="translate(22.5 309)"><rect x="-7.500" y="-5" width="15" height="10.500" fill="#e4e4e4" stroke="#222" stroke-width="1.400"/><path d="M-7.500 1c4-2.500 10 2.500 15 0M0-5c-1.500 3.500 1.500 7 0 10.500" fill="none" stroke="#333" stroke-width="1"/><path d="M-4-5c1 3-1 7 0 10M4-5c1 3-1 7 0 10" fill="none" stroke="#888" stroke-width=".8"/></g><g transform="translate(22.5 329)"><path d="M-7.500 8l1-3 8-8 2 2-8 8z" fill="#f4f4f4" stroke="#333" stroke-width="1.100"/><path d="M1-5l4 4M2.500-3.500l4-4" stroke="#222" stroke-width="2.600"/></g><path d="M32 334.5v3.500h-3.500z" fill="#111"/><g transform="translate(47.5 329)"><rect x="-8.500" y="-8" width="6" height="6" fill="#f0f0f0" stroke="#777"/><path d="M-3.500-3l5 5" stroke="#999" stroke-width="3.500" stroke-dasharray="1.300 1.300"/><circle cx="4" cy="4" r="3" fill="#e4e4e4" stroke="#333" stroke-width="1.200"/></g><g transform="translate(22.5 356)"><rect x="-3" y="-5.500" width="8.500" height="11.500" rx="1.500" fill="#e8e8e8" stroke="#222" stroke-width="1.300"/><rect x="-1" y="-1.500" width="4.500" height="4.500" fill="#fff" stroke="#333" stroke-width=".9"/><rect x=".5" y="0" width="1.500" height="1.500" fill="#111"/><rect x="-1.500" y="-8.500" width="4.500" height="3" fill="#333"/><path d="M-9-9h1M-6.500-10h1M-8-7h1M-5.500-8h1M-9-5h1M-6.500-6h1" stroke="#333" stroke-width="1.200"/></g><path d="M32 361.5v3.500h-3.500z" fill="#111"/><g transform="translate(47.5 355)"><path d="M-8-8.500V6h16" fill="none" stroke="#222" stroke-width="1.200"/><rect x="-6.500" y="-2" width="3.200" height="8" fill="#666"/><rect x="-2.500" y="-5" width="3.200" height="11" fill="#888"/><rect x="1.500" y="-3" width="3.200" height="9" fill="#777"/><rect x="5" y="-7.500" width="2.500" height="13.500" fill="#eee" stroke="#444" stroke-width=".8"/></g><path d="M58 361.5v3.500h-3.500z" fill="#111"/><g transform="translate(22.5 380)"><rect x="-5" y="-5" width="10" height="10" fill="#e4e4e4" stroke="#222" stroke-width="1.300"/><path d="M-5-8.500v3M5-8.500v3M-5 5.500v3M5 5.500v3M-8.500-5h3M-8.500 5h3M5.500-5h3M5.500 5h3" stroke="#888" stroke-width="1"/></g><g transform="translate(47.5 380)"><path d="M7-8l-8 8.500-3 4.500 5-2.500 7-8.500z" fill="#999" stroke="#222" stroke-width="1.100"/><path d="M-8 6.500l5-3" stroke="#222" stroke-width="1.500"/><path d="M1-6l4 3.500" stroke="#222" stroke-width="1.500"/></g><path d="M58 385.5v3.500h-3.500z" fill="#111"/><g transform="translate(22.5 401)"><path d="M-4.500-.5v-4c0-1.400 1.900-1.400 1.900 0v-2c0-1.400 1.900-1.400 1.900 0v-.3c0-1.400 1.900-1.400 1.900 0v1c0-1.400 1.900-1.400 1.900 0v7.300c0 3.500-1.800 5.500-4.800 5.500s-3.800-1.800-5.700-5.500c-.9-1.800.9-2.300 1.900-.9z" fill="#fff" stroke="#222" stroke-width="1.100"/></g><path d="M32 406.5v3.500h-3.500z" fill="#111"/><g transform="translate(47.5 400)"><circle cx="-2" cy="-2.500" r="5" fill="#e4e4e4" stroke="#444" stroke-width="1.500"/><path d="M1.500 1.500l5.500 5.500" stroke="#333" stroke-width="2.400"/></g><g transform="translate(22.5 425)"><path d="M3.500-8l4 3-11.500 12.500-4-3z" fill="#f8f8f8" stroke="#222" stroke-width="1.400" stroke-linejoin="round"/><path d="M1.500-5.500l3.800 3" stroke="#222" stroke-width="1.100"/><ellipse cx="-5.500" cy="5" rx="1.500" ry="1" fill="none" stroke="#222" stroke-width=".8"/></g></svg>
<div style="left:39px;top:303px;width:17px;height:12px;background:linear-gradient(90deg,#fff,#111);border:1px solid #888;border-bottom-color:#222"></div>
<div style="left:27px;top:458px;width:29px;height:29px;background:#fff;border:1px solid #222"></div>
<svg style="left:27px;top:458px" width="29" height="29" viewBox="0 0 29 29"><rect x="8.500" y="8.500" width="12" height="12" fill="#d6d6d6" stroke="#222"/><path d="M1 28L28 1" stroke="#c8102e" stroke-width="2"/></svg>
<div style="left:13px;top:444px;width:29px;height:29px;background:#acbe28;border:1px solid #222;box-shadow:inset 0 0 0 1px #f0f0f0"></div>
<svg style="left:46px;top:443px" width="12" height="11" viewBox="0 0 12 11"><path d="M3 2c4 0 6 2 6 6" fill="none" stroke="#222" stroke-width="1.400"/><path d="M0 2l3.500-2v4zM9 11l-2.500-3.500h5z" fill="#222"/></svg>
<svg style="left:13px;top:476px" width="11" height="11" viewBox="0 0 11 11"><rect x="3.500" y="3.500" width="7" height="7" fill="#222" stroke="#222"/><rect x=".5" y=".5" width="7" height="7" fill="#fff" stroke="#222"/></svg>
<div style="left:9px;top:495px;width:17px;height:15px;border:1px solid #777;border-radius:3px;background:#bcbcbc"></div>
<div style="left:12px;top:497px;width:11px;height:10px;background:#acbe28;border:1px solid #6a7a20"></div>
<div style="left:30px;top:497px;width:9px;height:10px;background:linear-gradient(90deg,#fff,#333);border:1px solid #aaa"></div>
<svg style="left:47px;top:497px" width="10" height="10"><rect width="10" height="10" fill="#fff"/><path d="M0 10L10 0" stroke="#c8102e" stroke-width="1.800"/></svg>
<div style="left:9px;top:514px;width:17px;height:16px;border:1px solid #555;border-radius:3px;background:#b4b4b4"></div>
<svg style="left:11px;top:516px" width="13" height="12" viewBox="0 0 13 12"><circle cx="5" cy="5" r="4.300" fill="#eee" stroke="#222" stroke-width="1.100"/><rect x="6.500" y="5.500" width="6" height="6" fill="#777" stroke="#222"/></svg>
<svg style="left:28px;top:516px" width="13" height="12" viewBox="0 0 13 12"><rect x="6.500" y="5.500" width="6" height="6" fill="#555" stroke="#222"/><circle cx="5" cy="5" r="4.300" fill="#eee" stroke="#222" stroke-width="1.100"/></svg>
<svg style="left:46px;top:516px" width="11" height="11" viewBox="0 0 11 11"><circle cx="5.500" cy="5.500" r="4.500" fill="#ddd" stroke="#999" stroke-width="1"/><path d="M5.500 5.500V1A4.500 4.500 0 0 1 10 5.500z" fill="#fff"/></svg>
<div style="left:24px;top:543px;width:14px;height:10px;background:linear-gradient(#bbb,#fff 40%);border:1px solid #ddd;border-right-color:#222;border-bottom-color:#222"></div>
<div style="left:31px;top:537px;width:14px;height:11px;background:linear-gradient(#999,#fff 35%);border:1px solid #ddd;border-right-color:#222;border-bottom-color:#222"></div>
<div style="left:1700px;top:81px;width:214px;height:954px;background:#d6d6d6"></div>
<div style="left:1700px;top:69px;width:1px;height:966px;background:#333"></div>
<div style="left:1701px;top:81px;width:214px;height:17px;background:linear-gradient(#9a9a9a,#8a8a8a);border-top:1px solid #6a6a6a"></div>
<div style="left:1701px;top:81px;width:49px;height:18px;background:#d6d6d6;border-top:1px solid #f0f0f0;border-left:1px solid #eee;border-right:1px solid #777"></div>
<div class="tab" style="left:1713px;top:82.5px;color:#222">Farbe</div>
<svg style="left:1705px;top:86px" width="5" height="8" viewBox="0 0 5 8"><path d="M0 3h5L2.500 0zM0 5h5L2.500 8z" fill="#222"/></svg>
<div style="left:1809px;top:82px;width:1px;height:16px;background:#6e6e6e"></div>
<div style="left:1810px;top:82px;width:1px;height:16px;background:#a8a8a8"></div>
<div class="tab" style="left:1757px;top:82.5px;color:#2c2c2c">Farbfelder</div>
<div style="left:1867px;top:82px;width:1px;height:16px;background:#6e6e6e"></div>
<div style="left:1868px;top:82px;width:1px;height:16px;background:#a8a8a8"></div>
<div class="tab" style="left:1817px;top:82.5px;color:#2c2c2c">Farbhilfe</div>
<svg style="left:1898px;top:86px" width="13" height="8" viewBox="0 0 13 8"><path d="M0 1h3.500l-1.750 2.500z" fill="#222"/><path d="M4.500 .5h8M4.500 3h8M4.500 5.500h8" stroke="#222" stroke-width="1.200"/></svg>
<div style="left:1714px;top:114px;width:19px;height:19px;background:#fff;border:1px solid #222"></div>
<svg style="left:1714px;top:114px" width="19" height="19" viewBox="0 0 19 19"><rect x="5.500" y="5.500" width="8" height="8" fill="#d6d6d6" stroke="#222"/><path d="M1 18L18 1" stroke="#c8102e" stroke-width="1.800"/></svg>
<div style="left:1705px;top:105px;width:20px;height:20px;background:#acbe28;border:1px solid #333"></div>
<svg style="left:1706px;top:138px" width="12" height="13" viewBox="0 0 12 13"><path d="M6 1l5 2.500v6L6 12 1 9.500v-6z" fill="#fff" stroke="#222" stroke-width="1.100"/><path d="M1 3.500L6 6l5-2.500M6 6v6" fill="none" stroke="#222" stroke-width="1"/><path d="M1 3.500L6 6v6L1 9.500z" fill="#888"/></svg>
<div style="left:1721px;top:139px;width:13px;height:12px;background:#8fc43c;border:1px solid #444"></div>
<div class="t" style="left:1744px;top:103px;font-size:10px;color:#222">C</div>
<div style="left:1756px;top:106px;width:103px;height:6px;background:linear-gradient(90deg,#f3e13a,#8fb83c 60%,#0f9a5c);border:1px solid #222"></div>
<svg style="left:1791px;top:112px" width="10" height="6" viewBox="0 0 10 6"><path d="M5 .5L9.500 5.500H.5z" fill="#e8e8e8" stroke="#888" stroke-width="1"/></svg>
<div style="left:1864px;top:101px;width:33px;height:16px;background:#fff"></div>
<div class="t" style="left:1869px;top:102.5px;font-size:9.5px">38,93</div>
<div class="t" style="left:1900px;top:103px;font-size:10.5px;font-weight:bold;color:#333">%</div>
<div class="t" style="left:1744px;top:121px;font-size:10px;color:#222">M</div>
<div style="left:1756px;top:124px;width:103px;height:6px;background:linear-gradient(90deg,#a8c83a,#b08a3a 60%,#c0463c);border:1px solid #222"></div>
<svg style="left:1764px;top:130px" width="10" height="6" viewBox="0 0 10 6"><path d="M5 .5L9.500 5.500H.5z" fill="#e8e8e8" stroke="#888" stroke-width="1"/></svg>
<div style="left:1864px;top:119px;width:33px;height:16px;background:#fff"></div>
<div class="t" style="left:1869px;top:120.5px;font-size:9.5px">12,04</div>
<div class="t" style="left:1900px;top:121px;font-size:10.5px;font-weight:bold;color:#333">%</div>
<div class="t" style="left:1744px;top:139px;font-size:10px;color:#222">Y</div>
<div style="left:1756px;top:142px;width:103px;height:6px;background:linear-gradient(90deg,#aacbe8,#a9c48a 50%,#acbe28);border:1px solid #222"></div>
<svg style="left:1849px;top:148px" width="10" height="6" viewBox="0 0 10 6"><path d="M5 .5L9.500 5.500H.5z" fill="#e8e8e8" stroke="#888" stroke-width="1"/></svg>
<div style="left:1864px;top:137px;width:33px;height:16px;background:#fff"></div>
<div class="t" style="left:1869px;top:138.5px;font-size:9.5px">96,63</div>
<div class="t" style="left:1900px;top:139px;font-size:10.5px;font-weight:bold;color:#333">%</div>
<div class="t" style="left:1744px;top:158px;font-size:10px;color:#222">K</div>
<div style="left:1756px;top:161px;width:103px;height:6px;background:linear-gradient(90deg,#acbe28,#5a6a20 60%,#1a1a10);border:1px solid #222"></div>
<svg style="left:1753px;top:167px" width="10" height="6" viewBox="0 0 10 6"><path d="M5 .5L9.500 5.500H.5z" fill="#e8e8e8" stroke="#888" stroke-width="1"/></svg>
<div style="left:1864px;top:156px;width:33px;height:16px;background:#fff"></div>
<div class="t" style="left:1869px;top:157.5px;font-size:9.5px">0,92</div>
<div class="t" style="left:1900px;top:158px;font-size:10.5px;font-weight:bold;color:#333">%</div>
<div style="left:1706px;top:174px;width:201px;height:17px;background:#000;border:1px solid #333"></div>
<div style="left:1723px;top:175px;width:167px;height:15px;background:linear-gradient(90deg,#e3261c,#f39a1e 9%,#f8ee2a 16%,#86c232 27%,#3fae3a 35%,#2fb39a 44%,#3ab6ea 52%,#2a52a8 63%,#5a2a92 74%,#a8248e 82%,#e81e82 90%,#e3202c 99%)"></div>
<div style="left:1723px;top:175px;width:167px;height:15px;background:linear-gradient(#fff 0%,rgba(255,255,255,0) 42%,rgba(0,0,0,0) 58%,#000 100%)"></div>
<div style="left:1707px;top:175px;width:16px;height:15px;background:#fff"></div>
<svg style="left:1707px;top:175px" width="16" height="15"><path d="M0 15L16 0" stroke="#c8102e" stroke-width="1.600"/></svg>
<div style="left:1890px;top:175px;width:16px;height:7px;background:#fff"></div>
<div style="left:1890px;top:182px;width:16px;height:8px;background:#000"></div>
<div style="left:1701px;top:199px;width:214px;height:3px;background:#333"></div>
<div style="left:1701px;top:202px;width:214px;height:17px;background:linear-gradient(#9a9a9a,#8a8a8a);border-top:1px solid #6a6a6a"></div>
<div style="left:1701px;top:202px;width:41px;height:18px;background:#d6d6d6;border-top:1px solid #f0f0f0;border-left:1px solid #eee;border-right:1px solid #777"></div>
<div class="tab" style="left:1708px;top:203.5px;color:#222">Pinsel</div>
<div style="left:1796px;top:203px;width:1px;height:16px;background:#6e6e6e"></div>
<div style="left:1797px;top:203px;width:1px;height:16px;background:#a8a8a8"></div>
<div class="tab" style="left:1749px;top:203.5px;color:#2c2c2c">Symbole</div>
<div style="left:1860px;top:203px;width:1px;height:16px;background:#6e6e6e"></div>
<div style="left:1861px;top:203px;width:1px;height:16px;background:#a8a8a8"></div>
<div class="tab" style="left:1804px;top:203.5px;color:#2c2c2c">Grafikstile</div>
<svg style="left:1898px;top:207px" width="13" height="8" viewBox="0 0 13 8"><path d="M0 1h3.500l-1.750 2.500z" fill="#222"/><path d="M4.500 .5h8M4.500 3h8M4.500 5.500h8" stroke="#222" stroke-width="1.200"/></svg>
<div style="left:1702px;top:220px;width:197px;height:215px;background:#fff;border-top:1.500px solid #111"></div>
<div style="left:1734px;top:220px;width:1px;height:32px;background:#222"></div>
<div style="left:1766px;top:220px;width:1px;height:32px;background:#222"></div>
<div style="left:1798px;top:220px;width:1px;height:32px;background:#222"></div>
<div style="left:1830px;top:220px;width:1px;height:32px;background:#222"></div>
<div style="left:1862px;top:220px;width:1px;height:32px;background:#222"></div>
<div style="left:1894px;top:220px;width:1px;height:32px;background:#222"></div>
<div style="left:1702px;top:252px;width:197px;height:1px;background:#222"></div>
<div style="left:1702px;top:284px;width:197px;height:1px;background:#222"></div>
<div style="left:1702px;top:316px;width:197px;height:1px;background:#222"></div>
<div style="left:1702px;top:348px;width:197px;height:1px;background:#222"></div>
<div style="left:1702px;top:380px;width:197px;height:1px;background:#222"></div>
<div style="left:1702px;top:412px;width:197px;height:1px;background:#222"></div>
<div style="left:1717px;top:236px;width:3px;height:1px;background:#444"></div>
<div style="left:1748px;top:235px;width:5px;height:3px;background:#111;border-radius:50%;transform:rotate(20deg)"></div>
<div style="left:1782px;top:233px;width:1px;height:6px;background:#bbb"></div>
<div style="left:1813px;top:235px;width:3px;height:3px;background:#111;border-radius:50%"></div>
<div style="left:1843px;top:233px;width:7px;height:7px;background:#111;border-radius:50%"></div>
<div style="left:1871px;top:228px;width:16px;height:16px;background:#000;border-radius:50%"></div>
<div style="left:1709px;top:267px;width:148px;height:3px;background:#000"></div>
<div class="t" style="left:1864px;top:261px;font-size:9.6px">Einfach</div>
<svg style="left:1702px;top:285px" width="197" height="150" viewBox="1702 285 197 150"><path d="M1710 300.500c10-1.500 30-2 50-2s40-.8 60-1c20-.2 50-.5 72 1.200-10 1.300-20 1.600-40 1.500-10 .8-20 1.500-34 1.500s-40 .8-56 .5c-10 .8-20 1.200-28 .8-10-.5-18-1.300-24-2.500z" fill="#000"/><path d="M1709 332.700c6-1.500 12-3.500 19-4.200h143c8 .7 15 2.500 21 4.200-6 1.800-13 3.500-21 4.200h-143c-7-.7-13-2.400-19-4.200z" fill="#000"/><path d="M1709 364.500c28-1.500 58-3 86-3 6 .5 12 1 18 1-2-2-2-4 1-5 3-2 8-1 10 1 2 1 4 1 6 0 8-3 18-5 27-4.500 6 0 10 1 14 2.500 8 0 14 3 18 7 2 2 3 4 3 6-6-3-14-5-22-4-10 1-20 2-30 1-6-.5-10 0-14 1 4 2 8 4 12 5-4 2-10 1-14-1-4 1-8 0-10-3-3-1-6-3-8-5-2 1-5 1-7-1-30 0-60 1.500-90 3z" fill="#000" stroke="#000" stroke-width="1.300" stroke-linejoin="round"/><path d="M1713 412v-13.500c0-3.500 2-5.500 5.500-5.500h94.500v-13h6v15c0 3-2 5-5 5h-94.500v12z" fill="#c8202c" stroke="#3a0a10" stroke-width="1.200"/><path d="M1831 393h41v-9l21.500 12.500-21.500 12.500v-9h-41z" fill="#c8202c" stroke="#3a0a10" stroke-width="1.200"/><path d="M1734.500 377v7M1766.500 377v7M1798.500 377v7M1830.500 377v7M1862.500 377v7M1734.500 409v7M1766.500 409v7M1798.500 409v7M1830.500 409v7M1862.500 409v7" stroke="#222" stroke-width="1"/><path d="M1734.500 391v11M1766.500 391v11M1798.500 391v11M1862.500 391v11" stroke="#fff" stroke-width="1"/><g transform="translate(1704 414)"><path d="M0 2c4 1 7 5 6 9s3 8 8 7 7-5 4-8-8-1-7 3 5 3 5 0M1 19c5-1 8-6 13-6s8-5 4-9-9 0-6 4M3 1c3 4 9 3 13 7s6 2 8-2M2 8c3 0 5 2 5 5M22 2c2 3 1 6-2 8M0 12c3 2 3 5 1 7M12 1c2 1 3 3 2 5M18 12c3 0 5 2 6 5M8 19c2-2 5-2 7 0" fill="none" stroke="#2c3046" stroke-width="1.900"/><path d="M4 4l3 3M10 9l4 3M16 5l3-2M6 14l3 2M19 15l3 2M1 5c2 1 3 3 3 5M9 3c0 2 1 4 3 5M14 16c1-2 3-3 5-3M20 6c0 2-1 4-3 5" fill="none" stroke="#2c3046" stroke-width="1.500"/></g><g transform="translate(1829 414) scale(-1 1)"><path d="M0 2c4 1 7 5 6 9s3 8 8 7 7-5 4-8-8-1-7 3 5 3 5 0M1 19c5-1 8-6 13-6s8-5 4-9-9 0-6 4M3 1c3 4 9 3 13 7s6 2 8-2M2 8c3 0 5 2 5 5M22 2c2 3 1 6-2 8M0 12c3 2 3 5 1 7M12 1c2 1 3 3 2 5M18 12c3 0 5 2 6 5M8 19c2-2 5-2 7 0" fill="none" stroke="#2c3046" stroke-width="1.900"/><path d="M4 4l3 3M10 9l4 3M16 5l3-2M6 14l3 2M19 15l3 2M1 5c2 1 3 3 3 5M9 3c0 2 1 4 3 5M14 16c1-2 3-3 5-3M20 6c0 2-1 4-3 5" fill="none" stroke="#2c3046" stroke-width="1.500"/></g><path d="M1728 423h76M1728 428.500h76" stroke="#777" stroke-width=".9"/><path d="M1739 428.500c5-2.500 9-2.500 12 0 3-1.500 6-1.500 9 0-3 1.500-6 1.500-9 0-3 2.500-7 2.500-12 0zM1771 428.500c5-2.500 9-2.500 12 0 3-1.500 6-1.500 9 0-3 1.500-6 1.500-9 0-3 2.500-7 2.500-12 0z" fill="#5e6440"/></svg>
<div style="left:1702px;top:434px;width:197px;height:1.5px;background:#111"></div>
<div style="left:1899px;top:220px;width:15px;height:215px;background:#ececec"></div>
<svg style="left:1902px;top:227px" width="8" height="5"><path d="M0 5h8l-4-5z" fill="#555"/></svg>
<div style="left:1900px;top:240px;width:13px;height:14px;background:linear-gradient(90deg,#fafafa,#d0d0d0);border:1px solid #a0a0a0;border-radius:2px"></div>
<svg style="left:1902px;top:424px" width="8" height="5"><path d="M0 0h8l-4 5z" fill="#555"/></svg>
<div style="left:1702px;top:435px;width:212px;height:16px;background:#d6d6d6"></div>
<svg style="left:1711px;top:437px" width="16" height="13" viewBox="0 0 16 13"><rect x="1.500" y="1.500" width="8" height="7" fill="#eee" stroke="#444"/><rect x="4.500" y="4.500" width="8" height="7" fill="#ccc" stroke="#444"/><path d="M16 9v4h-4z" fill="#222"/></svg>
<svg style="left:1778px;top:438px" width="12" height="11"><path d="M1 1l9 9M10 1L1 10" stroke="#b0b0b0" stroke-width="1.800"/></svg>
<svg style="left:1805px;top:438px" width="22" height="11"><path d="M8 1L1 10" stroke="#b0b0b0" stroke-width="1.800"/><path d="M10 3h10M12 6h8M12 9h8" stroke="#a8a8a8" stroke-width="1.300"/></svg>
<svg style="left:1847px;top:437px" width="12" height="12" viewBox="0 0 12 12"><rect x="1.500" y="1.500" width="9" height="9" fill="#eee" stroke="#444"/><rect x="4.500" y="4.500" width="6" height="6" fill="#bbb" stroke="#444"/></svg>
<svg style="left:1878px;top:436px" width="11" height="14" viewBox="0 0 11 14"><path d="M1 3.500h9M4 3V1.500h3V3" stroke="#333" fill="none" stroke-width="1.200"/><path d="M2 5h7l-.7 8.500H2.700z" fill="#555" stroke="#333"/><path d="M4.200 6.500v5.500M6.800 6.500v5.500" stroke="#ddd" stroke-width=".9"/></svg>
<div style="left:1701px;top:452px;width:214px;height:3px;background:#333"></div>
<div style="left:1701px;top:455px;width:214px;height:17px;background:linear-gradient(#9a9a9a,#8a8a8a);border-top:1px solid #6a6a6a"></div>
<div style="left:1701px;top:455px;width:47px;height:18px;background:#d6d6d6;border-top:1px solid #f0f0f0;border-left:1px solid #eee;border-right:1px solid #777"></div>
<div class="tab" style="left:1708px;top:456.5px;color:#222">Ebenen</div>
<div style="left:1797px;top:456px;width:1px;height:16px;background:#6e6e6e"></div>
<div style="left:1798px;top:456px;width:1px;height:16px;background:#a8a8a8"></div>
<div class="tab" style="left:1755px;top:456.5px;color:#2c2c2c">Zeichen</div>
<div style="left:1844px;top:456px;width:1px;height:16px;background:#6e6e6e"></div>
<div style="left:1845px;top:456px;width:1px;height:16px;background:#a8a8a8"></div>
<div class="tab" style="left:1805px;top:456.5px;color:#2c2c2c">Absatz</div>
<svg style="left:1898px;top:460px" width="13" height="8" viewBox="0 0 13 8"><path d="M0 1h3.500l-1.750 2.500z" fill="#222"/><path d="M4.500 .5h8M4.500 3h8M4.500 5.500h8" stroke="#222" stroke-width="1.200"/></svg>
<div style="left:1701px;top:473px;width:214px;height:1px;background:#444"></div>
<div style="left:1748px;top:474px;width:150px;height:279px;background:#fff"></div>
<div style="left:1747px;top:474px;width:1px;height:279px;background:#222"></div>
<div style="left:1701px;top:753px;width:197px;height:1px;background:#222"></div>
<div style="left:1701px;top:754px;width:197px;height:44px;background:#d9d9d9"></div>
<div style="left:1898px;top:474px;width:15px;height:324px;background:#ececec"></div>
<svg style="left:1901px;top:480px" width="8" height="5"><path d="M0 5h8l-4-5z" fill="#888"/></svg>
<svg style="left:1901px;top:788px" width="8" height="5"><path d="M0 0h8l-4 5z" fill="#888"/></svg>
<div style="left:1703px;top:475px;width:17px;height:18px;background:#cfcfcf;border:1px solid #eee;border-right-color:#b0b0b0;border-bottom-color:#a8a8a8"></div>
<svg style="left:1705px;top:479px" width="14" height="10" viewBox="0 0 14 10"><path d="M0 5.500C2 1.500 5 .5 7 .5s5 1 7 5c-2 3-5 4-7 4s-5-1-7-4z" fill="#3a3a3a"/><path d="M1.800 5.800C3.300 4 5 3.200 7 3.200s3.700.8 5.200 2.600c-1.500 1.700-3.200 2.400-5.200 2.400s-3.700-.7-5.200-2.400z" fill="#c4c4c4"/><circle cx="7" cy="5.300" r="2.800" fill="#111"/><circle cx="6" cy="4.300" r=".9" fill="#fff"/></svg>
<div style="left:1722px;top:475px;width:15px;height:18px;background:#d2d2d2;border:1px solid #eee;border-right-color:#b0b0b0;border-bottom-color:#a8a8a8"></div>
<div style="left:1739px;top:477px;width:4px;height:14px;background:#0f8a4a"></div>
<div style="left:1748px;top:474px;width:150px;height:20px;background:#dcdcdc"></div>
<svg style="left:1751px;top:481px" width="10" height="7" viewBox="0 0 10 7"><path d="M.8 .8h8.400L5 6z" fill="#f4f8fc" stroke="#8fa4bc" stroke-width="1.100"/></svg>
<svg style="left:1765px;top:476px" width="16" height="16" viewBox="-1 -1 16 16"><rect x="-.5" y="-.5" width="15" height="15" fill="#fff" stroke="#111" stroke-width="1"/><rect x="1" y="1" width="12" height="12" fill="#ddd"/><rect x="1" y="1" width="12" height="4" fill="#75788b"/><rect x="1" y="11" width="12" height="2" fill="#eee"/></svg>
<div class="t" style="left:1785px;top:478px;font-size:10px">Meine Ebene</div>
<svg style="left:1873px;top:479px" width="11" height="11" viewBox="0 0 11 11"><circle cx="5.500" cy="5.500" r="4.300" fill="#fff" stroke="#555" stroke-width="1.100"/></svg>
<div style="left:1889px;top:482px;width:5px;height:5px;background:#0f8a4a"></div>
<svg style="left:1890px;top:474px" width="7" height="5"><path d="M0 0h7v5z" fill="#111"/></svg>
<div style="left:1703px;top:495px;width:17px;height:18px;background:#cfcfcf;border:1px solid #eee;border-right-color:#b0b0b0;border-bottom-color:#a8a8a8"></div>
<svg style="left:1705px;top:499px" width="14" height="10" viewBox="0 0 14 10"><path d="M0 5.500C2 1.500 5 .5 7 .5s5 1 7 5c-2 3-5 4-7 4s-5-1-7-4z" fill="#3a3a3a"/><path d="M1.800 5.800C3.300 4 5 3.200 7 3.200s3.700.8 5.200 2.600c-1.500 1.700-3.200 2.400-5.200 2.400s-3.700-.7-5.200-2.400z" fill="#c4c4c4"/><circle cx="7" cy="5.300" r="2.800" fill="#111"/><circle cx="6" cy="4.300" r=".9" fill="#fff"/></svg>
<div style="left:1722px;top:495px;width:15px;height:18px;background:#d2d2d2;border:1px solid #eee;border-right-color:#b0b0b0;border-bottom-color:#a8a8a8"></div>
<div style="left:1739px;top:497px;width:4px;height:14px;background:#0f8a4a"></div>
<div style="left:1778px;top:494px;width:118px;height:20px;background:#3b95f2"></div>
<svg style="left:1767px;top:501px" width="10" height="7" viewBox="0 0 10 7"><path d="M.8 .8h8.400L5 6z" fill="#f4f8fc" stroke="#8fa4bc" stroke-width="1.100"/></svg>
<svg style="left:1780px;top:496px" width="16" height="16" viewBox="-1 -1 16 16"><rect x="-.5" y="-.5" width="15" height="15" fill="#fff" stroke="#111" stroke-width="1"/><path d="M7 1.500L2 7v6h10V7z" fill="#acbe28"/><path d="M2 8.500h10M2 10.500h10M5 7v6M9 7v6" stroke="#d8e48a" stroke-width=".6"/></svg>
<div class="t" style="left:1800px;top:498px;font-size:10px;color:#fff;font-weight:bold">Haus</div>
<svg style="left:1871px;top:497px" width="14" height="14" viewBox="0 0 14 14"><circle cx="7" cy="7" r="6" fill="none" stroke="#1c56a0" stroke-width="1.200"/><circle cx="7" cy="7" r="3.600" fill="#3b95f2" stroke="#123a78" stroke-width="1.300"/></svg>
<div style="left:1888px;top:500px;width:8px;height:9px;background:#0f7a40;border:1px solid #064a24"></div>
<div style="left:1703px;top:515px;width:17px;height:18px;background:#cfcfcf;border:1px solid #eee;border-right-color:#b0b0b0;border-bottom-color:#a8a8a8"></div>
<svg style="left:1705px;top:519px" width="14" height="10" viewBox="0 0 14 10"><path d="M0 5.500C2 1.500 5 .5 7 .5s5 1 7 5c-2 3-5 4-7 4s-5-1-7-4z" fill="#3a3a3a"/><path d="M1.800 5.800C3.300 4 5 3.200 7 3.200s3.700.8 5.200 2.600c-1.500 1.700-3.200 2.400-5.200 2.400s-3.700-.7-5.200-2.400z" fill="#c4c4c4"/><circle cx="7" cy="5.300" r="2.800" fill="#111"/><circle cx="6" cy="4.300" r=".9" fill="#fff"/></svg>
<div style="left:1722px;top:515px;width:15px;height:18px;background:#d2d2d2;border:1px solid #eee;border-right-color:#b0b0b0;border-bottom-color:#a8a8a8"></div>
<div style="left:1739px;top:517px;width:4px;height:14px;background:#0f8a4a"></div>
<div style="left:1793px;top:514px;width:105px;height:1px;background:#a4a4a4"></div>
<svg style="left:1795px;top:516px" width="16" height="16" viewBox="-1 -1 16 16"><rect x="-.5" y="-.5" width="15" height="15" fill="#fff" stroke="#111" stroke-width="1"/><path d="M1.500 11L7 4.500L12.500 11" fill="none" stroke="#acbe28" stroke-width="1.600"/></svg>
<div class="t" style="left:1816px;top:518px;font-size:10px">&lt;Pfad&gt;</div>
<svg style="left:1873px;top:519px" width="11" height="11" viewBox="0 0 11 11"><circle cx="5.500" cy="5.500" r="4.300" fill="#fff" stroke="#555" stroke-width="1.100"/></svg>
<div style="left:1888px;top:520px;width:8px;height:9px;background:#0f7a40;border:1px solid #064a24"></div>
<div style="left:1703px;top:535px;width:17px;height:18px;background:#cfcfcf;border:1px solid #eee;border-right-color:#b0b0b0;border-bottom-color:#a8a8a8"></div>
<svg style="left:1705px;top:539px" width="14" height="10" viewBox="0 0 14 10"><path d="M0 5.500C2 1.500 5 .5 7 .5s5 1 7 5c-2 3-5 4-7 4s-5-1-7-4z" fill="#3a3a3a"/><path d="M1.800 5.800C3.300 4 5 3.200 7 3.200s3.700.8 5.200 2.600c-1.500 1.700-3.200 2.400-5.200 2.400s-3.700-.7-5.200-2.400z" fill="#c4c4c4"/><circle cx="7" cy="5.300" r="2.800" fill="#111"/><circle cx="6" cy="4.300" r=".9" fill="#fff"/></svg>
<div style="left:1722px;top:535px;width:15px;height:18px;background:#d2d2d2;border:1px solid #eee;border-right-color:#b0b0b0;border-bottom-color:#a8a8a8"></div>
<div style="left:1739px;top:537px;width:4px;height:14px;background:#0f8a4a"></div>
<div style="left:1793px;top:534px;width:105px;height:1px;background:#a4a4a4"></div>
<svg style="left:1795px;top:536px" width="16" height="16" viewBox="-1 -1 16 16"><rect x="-.5" y="-.5" width="15" height="15" fill="#fff" stroke="#111" stroke-width="1"/><path d="M2.500 11L7 5.500L11.500 11" fill="none" stroke="#acbe28" stroke-width="1.300" opacity=".8"/></svg>
<div class="t" style="left:1816px;top:538px;font-size:10px">&lt;Pfad&gt;</div>
<svg style="left:1873px;top:539px" width="11" height="11" viewBox="0 0 11 11"><circle cx="5.500" cy="5.500" r="4.300" fill="#fff" stroke="#555" stroke-width="1.100"/></svg>
<div style="left:1888px;top:540px;width:8px;height:9px;background:#0f7a40;border:1px solid #064a24"></div>
<div style="left:1703px;top:555px;width:17px;height:18px;background:#cfcfcf;border:1px solid #eee;border-right-color:#b0b0b0;border-bottom-color:#a8a8a8"></div>
<svg style="left:1705px;top:559px" width="14" height="10" viewBox="0 0 14 10"><path d="M0 5.500C2 1.500 5 .5 7 .5s5 1 7 5c-2 3-5 4-7 4s-5-1-7-4z" fill="#3a3a3a"/><path d="M1.800 5.800C3.300 4 5 3.200 7 3.200s3.700.8 5.200 2.600c-1.500 1.700-3.200 2.400-5.200 2.400s-3.700-.7-5.200-2.400z" fill="#c4c4c4"/><circle cx="7" cy="5.300" r="2.800" fill="#111"/><circle cx="6" cy="4.300" r=".9" fill="#fff"/></svg>
<div style="left:1722px;top:555px;width:15px;height:18px;background:#d2d2d2;border:1px solid #eee;border-right-color:#b0b0b0;border-bottom-color:#a8a8a8"></div>
<div style="left:1739px;top:557px;width:4px;height:14px;background:#0f8a4a"></div>
<div style="left:1793px;top:554px;width:105px;height:1px;background:#a4a4a4"></div>
<svg style="left:1795px;top:556px" width="16" height="16" viewBox="-1 -1 16 16"><rect x="-.5" y="-.5" width="15" height="15" fill="#fff" stroke="#111" stroke-width="1"/><path d="M2 11.500L7 5L12 11.500z" fill="#acbe28"/></svg>
<div class="t" style="left:1816px;top:558px;font-size:10px">&lt;Pfad&gt;</div>
<svg style="left:1873px;top:559px" width="11" height="11" viewBox="0 0 11 11"><circle cx="5.500" cy="5.500" r="4.300" fill="#fff" stroke="#555" stroke-width="1.100"/></svg>
<div style="left:1888px;top:560px;width:8px;height:9px;background:#0f7a40;border:1px solid #064a24"></div>
<div style="left:1703px;top:575px;width:17px;height:18px;background:#cfcfcf;border:1px solid #eee;border-right-color:#b0b0b0;border-bottom-color:#a8a8a8"></div>
<svg style="left:1705px;top:579px" width="14" height="10" viewBox="0 0 14 10"><path d="M0 5.500C2 1.500 5 .5 7 .5s5 1 7 5c-2 3-5 4-7 4s-5-1-7-4z" fill="#3a3a3a"/><path d="M1.800 5.800C3.300 4 5 3.200 7 3.200s3.700.8 5.200 2.600c-1.500 1.700-3.200 2.400-5.200 2.400s-3.700-.7-5.200-2.400z" fill="#c4c4c4"/><circle cx="7" cy="5.300" r="2.800" fill="#111"/><circle cx="6" cy="4.300" r=".9" fill="#fff"/></svg>
<div style="left:1722px;top:575px;width:15px;height:18px;background:#d2d2d2;border:1px solid #eee;border-right-color:#b0b0b0;border-bottom-color:#a8a8a8"></div>
<div style="left:1739px;top:577px;width:4px;height:14px;background:#0f8a4a"></div>
<div style="left:1793px;top:574px;width:105px;height:1px;background:#a4a4a4"></div>
<svg style="left:1795px;top:576px" width="16" height="16" viewBox="-1 -1 16 16"><rect x="-.5" y="-.5" width="15" height="15" fill="#fff" stroke="#111" stroke-width="1"/><path d="M7 2v10" stroke="#acbe28" stroke-width="1" stroke-dasharray="1 .6"/></svg>
<div class="t" style="left:1816px;top:578px;font-size:10px">&lt;Pfad&gt;</div>
<svg style="left:1873px;top:579px" width="11" height="11" viewBox="0 0 11 11"><circle cx="5.500" cy="5.500" r="4.300" fill="#fff" stroke="#555" stroke-width="1.100"/></svg>
<div style="left:1888px;top:580px;width:8px;height:9px;background:#0f7a40;border:1px solid #064a24"></div>
<div style="left:1703px;top:595px;width:17px;height:18px;background:#cfcfcf;border:1px solid #eee;border-right-color:#b0b0b0;border-bottom-color:#a8a8a8"></div>
<svg style="left:1705px;top:599px" width="14" height="10" viewBox="0 0 14 10"><path d="M0 5.500C2 1.500 5 .5 7 .5s5 1 7 5c-2 3-5 4-7 4s-5-1-7-4z" fill="#3a3a3a"/><path d="M1.800 5.800C3.300 4 5 3.200 7 3.200s3.700.8 5.200 2.600c-1.500 1.700-3.200 2.400-5.200 2.400s-3.700-.7-5.200-2.400z" fill="#c4c4c4"/><circle cx="7" cy="5.300" r="2.800" fill="#111"/><circle cx="6" cy="4.300" r=".9" fill="#fff"/></svg>
<div style="left:1722px;top:595px;width:15px;height:18px;background:#d2d2d2;border:1px solid #eee;border-right-color:#b0b0b0;border-bottom-color:#a8a8a8"></div>
<div style="left:1739px;top:597px;width:4px;height:14px;background:#0f8a4a"></div>
<div style="left:1793px;top:594px;width:105px;height:1px;background:#a4a4a4"></div>
<svg style="left:1795px;top:596px" width="16" height="16" viewBox="-1 -1 16 16"><rect x="-.5" y="-.5" width="15" height="15" fill="#fff" stroke="#111" stroke-width="1"/><path d="M7 2v10" stroke="#acbe28" stroke-width="1.600"/></svg>
<div class="t" style="left:1816px;top:598px;font-size:10px">&lt;Pfad&gt;</div>
<svg style="left:1873px;top:599px" width="11" height="11" viewBox="0 0 11 11"><circle cx="5.500" cy="5.500" r="4.300" fill="#fff" stroke="#555" stroke-width="1.100"/></svg>
<div style="left:1888px;top:600px;width:8px;height:9px;background:#0f7a40;border:1px solid #064a24"></div>
<div style="left:1703px;top:615px;width:17px;height:18px;background:#cfcfcf;border:1px solid #eee;border-right-color:#b0b0b0;border-bottom-color:#a8a8a8"></div>
<svg style="left:1705px;top:619px" width="14" height="10" viewBox="0 0 14 10"><path d="M0 5.500C2 1.500 5 .5 7 .5s5 1 7 5c-2 3-5 4-7 4s-5-1-7-4z" fill="#3a3a3a"/><path d="M1.800 5.800C3.300 4 5 3.200 7 3.200s3.700.8 5.200 2.600c-1.500 1.700-3.200 2.400-5.200 2.400s-3.700-.7-5.200-2.400z" fill="#c4c4c4"/><circle cx="7" cy="5.300" r="2.800" fill="#111"/><circle cx="6" cy="4.300" r=".9" fill="#fff"/></svg>
<div style="left:1722px;top:615px;width:15px;height:18px;background:#d2d2d2;border:1px solid #eee;border-right-color:#b0b0b0;border-bottom-color:#a8a8a8"></div>
<div style="left:1739px;top:617px;width:4px;height:14px;background:#0f8a4a"></div>
<div style="left:1793px;top:614px;width:105px;height:1px;background:#a4a4a4"></div>
<svg style="left:1795px;top:616px" width="16" height="16" viewBox="-1 -1 16 16"><rect x="-.5" y="-.5" width="15" height="15" fill="#fff" stroke="#111" stroke-width="1"/><path d="M7 2v10" stroke="#acbe28" stroke-width="2.600"/></svg>
<div class="t" style="left:1816px;top:618px;font-size:10px">&lt;Pfad&gt;</div>
<svg style="left:1873px;top:619px" width="11" height="11" viewBox="0 0 11 11"><circle cx="5.500" cy="5.500" r="4.300" fill="#fff" stroke="#555" stroke-width="1.100"/></svg>
<div style="left:1888px;top:620px;width:8px;height:9px;background:#0f7a40;border:1px solid #064a24"></div>
<div style="left:1703px;top:635px;width:17px;height:18px;background:#cfcfcf;border:1px solid #eee;border-right-color:#b0b0b0;border-bottom-color:#a8a8a8"></div>
<svg style="left:1705px;top:639px" width="14" height="10" viewBox="0 0 14 10"><path d="M0 5.500C2 1.500 5 .5 7 .5s5 1 7 5c-2 3-5 4-7 4s-5-1-7-4z" fill="#3a3a3a"/><path d="M1.800 5.800C3.300 4 5 3.200 7 3.200s3.700.8 5.200 2.600c-1.500 1.700-3.200 2.400-5.200 2.400s-3.700-.7-5.200-2.400z" fill="#c4c4c4"/><circle cx="7" cy="5.300" r="2.800" fill="#111"/><circle cx="6" cy="4.300" r=".9" fill="#fff"/></svg>
<div style="left:1722px;top:635px;width:15px;height:18px;background:#d2d2d2;border:1px solid #eee;border-right-color:#b0b0b0;border-bottom-color:#a8a8a8"></div>
<div style="left:1739px;top:637px;width:4px;height:14px;background:#0f8a4a"></div>
<div style="left:1793px;top:634px;width:105px;height:1px;background:#a4a4a4"></div>
<svg style="left:1795px;top:636px" width="16" height="16" viewBox="-1 -1 16 16"><rect x="-.5" y="-.5" width="15" height="15" fill="#fff" stroke="#111" stroke-width="1"/><rect x="1" y="1" width="12" height="12" fill="#acbe28"/></svg>
<div class="t" style="left:1816px;top:638px;font-size:10px">&lt;Pfad&gt;</div>
<svg style="left:1873px;top:639px" width="11" height="11" viewBox="0 0 11 11"><circle cx="5.500" cy="5.500" r="4.300" fill="#fff" stroke="#555" stroke-width="1.100"/></svg>
<div style="left:1888px;top:640px;width:8px;height:9px;background:#0f7a40;border:1px solid #064a24"></div>
<div style="left:1703px;top:655px;width:17px;height:18px;background:#cfcfcf;border:1px solid #eee;border-right-color:#b0b0b0;border-bottom-color:#a8a8a8"></div>
<svg style="left:1705px;top:659px" width="14" height="10" viewBox="0 0 14 10"><path d="M0 5.500C2 1.500 5 .5 7 .5s5 1 7 5c-2 3-5 4-7 4s-5-1-7-4z" fill="#3a3a3a"/><path d="M1.800 5.800C3.300 4 5 3.200 7 3.200s3.700.8 5.200 2.600c-1.500 1.700-3.200 2.400-5.200 2.400s-3.700-.7-5.200-2.400z" fill="#c4c4c4"/><circle cx="7" cy="5.300" r="2.800" fill="#111"/><circle cx="6" cy="4.300" r=".9" fill="#fff"/></svg>
<div style="left:1722px;top:655px;width:15px;height:18px;background:#d2d2d2;border:1px solid #eee;border-right-color:#b0b0b0;border-bottom-color:#a8a8a8"></div>
<div style="left:1739px;top:657px;width:4px;height:14px;background:#0f8a4a"></div>
<div style="left:1778px;top:654px;width:120px;height:1px;background:#a4a4a4"></div>
<svg style="left:1780px;top:656px" width="16" height="16" viewBox="-1 -1 16 16"><rect x="-.5" y="-.5" width="15" height="15" fill="#fff" stroke="#111" stroke-width="1"/><rect x="1" y="4" width="12" height="6" fill="#75788b"/></svg>
<div class="t" style="left:1800px;top:658px;font-size:10px">&lt;Pfad&gt;</div>
<svg style="left:1873px;top:659px" width="11" height="11" viewBox="0 0 11 11"><circle cx="5.500" cy="5.500" r="4.300" fill="#fff" stroke="#555" stroke-width="1.100"/></svg>
<div style="left:1703px;top:675px;width:17px;height:18px;background:#cfcfcf;border:1px solid #eee;border-right-color:#b0b0b0;border-bottom-color:#a8a8a8"></div>
<svg style="left:1705px;top:679px" width="14" height="10" viewBox="0 0 14 10"><path d="M0 5.500C2 1.500 5 .5 7 .5s5 1 7 5c-2 3-5 4-7 4s-5-1-7-4z" fill="#3a3a3a"/><path d="M1.800 5.800C3.300 4 5 3.200 7 3.200s3.700.8 5.200 2.600c-1.500 1.700-3.200 2.400-5.200 2.400s-3.700-.7-5.200-2.400z" fill="#c4c4c4"/><circle cx="7" cy="5.300" r="2.800" fill="#111"/><circle cx="6" cy="4.300" r=".9" fill="#fff"/></svg>
<div style="left:1722px;top:675px;width:15px;height:18px;background:#d2d2d2;border:1px solid #eee;border-right-color:#b0b0b0;border-bottom-color:#a8a8a8"></div>
<div style="left:1739px;top:677px;width:4px;height:14px;background:#0f8a4a"></div>
<div style="left:1778px;top:674px;width:120px;height:1px;background:#a4a4a4"></div>
<svg style="left:1780px;top:676px" width="16" height="16" viewBox="-1 -1 16 16"><rect x="-.5" y="-.5" width="15" height="15" fill="#fff" stroke="#111" stroke-width="1"/></svg>
<div class="t" style="left:1800px;top:678px;font-size:10px">&lt;Hilfslinie&gt;</div>
<svg style="left:1873px;top:679px" width="11" height="11" viewBox="0 0 11 11"><circle cx="5.500" cy="5.500" r="4.300" fill="#fff" stroke="#555" stroke-width="1.100"/></svg>
<div style="left:1703px;top:695px;width:17px;height:18px;background:#cfcfcf;border:1px solid #eee;border-right-color:#b0b0b0;border-bottom-color:#a8a8a8"></div>
<svg style="left:1705px;top:699px" width="14" height="10" viewBox="0 0 14 10"><path d="M0 5.500C2 1.500 5 .5 7 .5s5 1 7 5c-2 3-5 4-7 4s-5-1-7-4z" fill="#3a3a3a"/><path d="M1.800 5.800C3.300 4 5 3.200 7 3.200s3.700.8 5.200 2.600c-1.500 1.700-3.200 2.400-5.200 2.400s-3.700-.7-5.200-2.400z" fill="#c4c4c4"/><circle cx="7" cy="5.300" r="2.800" fill="#111"/><circle cx="6" cy="4.300" r=".9" fill="#fff"/></svg>
<div style="left:1722px;top:695px;width:15px;height:18px;background:#d2d2d2;border:1px solid #eee;border-right-color:#b0b0b0;border-bottom-color:#a8a8a8"></div>
<div style="left:1739px;top:697px;width:4px;height:14px;background:#0f8a4a"></div>
<div style="left:1778px;top:694px;width:120px;height:1px;background:#a4a4a4"></div>
<svg style="left:1780px;top:696px" width="16" height="16" viewBox="-1 -1 16 16"><rect x="-.5" y="-.5" width="15" height="15" fill="#fff" stroke="#111" stroke-width="1"/></svg>
<div class="t" style="left:1800px;top:698px;font-size:10px">&lt;Hilfslinie&gt;</div>
<svg style="left:1873px;top:699px" width="11" height="11" viewBox="0 0 11 11"><circle cx="5.500" cy="5.500" r="4.300" fill="#fff" stroke="#555" stroke-width="1.100"/></svg>
<div style="left:1703px;top:715px;width:17px;height:18px;background:#cfcfcf;border:1px solid #eee;border-right-color:#b0b0b0;border-bottom-color:#a8a8a8"></div>
<svg style="left:1705px;top:719px" width="14" height="10" viewBox="0 0 14 10"><path d="M0 5.500C2 1.500 5 .5 7 .5s5 1 7 5c-2 3-5 4-7 4s-5-1-7-4z" fill="#3a3a3a"/><path d="M1.800 5.800C3.300 4 5 3.200 7 3.200s3.700.8 5.200 2.600c-1.500 1.700-3.200 2.400-5.200 2.400s-3.700-.7-5.200-2.400z" fill="#c4c4c4"/><circle cx="7" cy="5.300" r="2.800" fill="#111"/><circle cx="6" cy="4.300" r=".9" fill="#fff"/></svg>
<div style="left:1722px;top:715px;width:15px;height:18px;background:#d2d2d2;border:1px solid #eee;border-right-color:#b0b0b0;border-bottom-color:#a8a8a8"></div>
<div style="left:1739px;top:717px;width:4px;height:14px;background:#0f8a4a"></div>
<div style="left:1778px;top:714px;width:120px;height:1px;background:#a4a4a4"></div>
<svg style="left:1767px;top:719px" width="7" height="10" viewBox="0 0 7 10"><path d="M.8 .8v8.400L6 5z" fill="#f4f8fc" stroke="#8fa4bc" stroke-width="1.100"/></svg>
<svg style="left:1780px;top:716px" width="16" height="16" viewBox="-1 -1 16 16"><rect x="-.5" y="-.5" width="15" height="15" fill="#fff" stroke="#111" stroke-width="1"/><rect x="2" y="2" width="10" height="10" fill="#c6c6c6"/></svg>
<div class="t" style="left:1800px;top:718px;font-size:10px">&lt;Gruppe&gt;</div>
<svg style="left:1873px;top:719px" width="11" height="11" viewBox="0 0 11 11"><circle cx="5.500" cy="5.500" r="4.300" fill="#fff" stroke="#555" stroke-width="1.100"/></svg>
<div style="left:1703px;top:735px;width:17px;height:18px;background:#cfcfcf;border:1px solid #eee;border-right-color:#b0b0b0;border-bottom-color:#a8a8a8"></div>
<svg style="left:1705px;top:739px" width="14" height="10" viewBox="0 0 14 10"><path d="M0 5.500C2 1.500 5 .5 7 .5s5 1 7 5c-2 3-5 4-7 4s-5-1-7-4z" fill="#3a3a3a"/><path d="M1.800 5.800C3.300 4 5 3.200 7 3.200s3.700.8 5.200 2.600c-1.500 1.700-3.200 2.400-5.200 2.400s-3.700-.7-5.200-2.400z" fill="#c4c4c4"/><circle cx="7" cy="5.300" r="2.800" fill="#111"/><circle cx="6" cy="4.300" r=".9" fill="#fff"/></svg>
<div style="left:1722px;top:735px;width:15px;height:18px;background:#d2d2d2;border:1px solid #eee;border-right-color:#b0b0b0;border-bottom-color:#a8a8a8"></div>
<div style="left:1739px;top:737px;width:4px;height:14px;background:#e8651e"></div>
<svg style="left:1725px;top:738px" width="10" height="12" viewBox="0 0 10 12"><path d="M2.500 5V3.500a2.500 2.500 0 0 1 5 0V5" fill="none" stroke="#222" stroke-width="1.400"/><rect x="1" y="5" width="8" height="6.500" rx="1" fill="#222"/></svg>
<div style="left:1748px;top:734px;width:150px;height:20px;background:#dcdcdc"></div>
<div style="left:1748px;top:734px;width:150px;height:1px;background:#bbb"></div>
<svg style="left:1751px;top:739px" width="7" height="10" viewBox="0 0 7 10"><path d="M.8 .8v8.400L6 5z" fill="#f4f8fc" stroke="#8fa4bc" stroke-width="1.100"/></svg>
<svg style="left:1765px;top:736px" width="16" height="16" viewBox="-1 -1 16 16"><rect x="-.5" y="-.5" width="15" height="15" fill="#fff" stroke="#111" stroke-width="1"/><path d="M8 2v10" stroke="#bbb" stroke-width=".8"/><path d="M6 12.500h4" stroke="#444" stroke-width="1"/></svg>
<div class="t" style="left:1785px;top:738px;font-size:10px">Vorlage</div>
<svg style="left:1873px;top:739px" width="11" height="11" viewBox="0 0 11 11"><circle cx="5.500" cy="5.500" r="4.300" fill="#fff" stroke="#555" stroke-width="1.100"/></svg>
<div style="left:1761px;top:492px;width:139px;height:164px;border:5px solid #fb0509;border-radius:3px"></div>
<div style="left:1701px;top:798px;width:214px;height:18px;background:#d6d6d6"></div>
<div style="left:1701px;top:798px;width:197px;height:1px;background:#333"></div>
<div class="t" style="left:1712px;top:800px;font-size:10px">2 Ebenen</div>
<svg style="left:1783px;top:800px" width="14" height="13" viewBox="0 0 14 13"><rect x="1.500" y="1.500" width="8" height="7" fill="#eee" stroke="#444" stroke-dasharray="1.500 1"/><circle cx="9" cy="8" r="3.500" fill="#ddd" stroke="#333"/><path d="M9 8V4.500A3.500 3.500 0 0 1 12.500 8z" fill="#333"/></svg>
<svg style="left:1811px;top:801px" width="16" height="12" viewBox="0 0 16 12"><path d="M0 4h5M3 2l2 2-2 2" fill="none" stroke="#333" stroke-width="1.100"/><rect x="7.500" y="3.500" width="7" height="7" fill="#eee" stroke="#444"/><rect x="10" y="6" width="4.500" height="4.500" fill="#aaa"/></svg>
<svg style="left:1846px;top:801px" width="12" height="12" viewBox="0 0 12 12"><rect x="1.500" y="1.500" width="9" height="9" fill="#eee" stroke="#444"/><rect x="4.500" y="4.500" width="6" height="6" fill="#bbb" stroke="#444"/></svg>
<svg style="left:1878px;top:799px" width="11" height="14" viewBox="0 0 11 14"><path d="M1 3.500h9M4 3V1.500h3V3" stroke="#333" fill="none" stroke-width="1.200"/><path d="M2 5h7l-.7 8.500H2.700z" fill="#555" stroke="#333"/><path d="M4.200 6.500v5.500M6.800 6.500v5.500" stroke="#ddd" stroke-width=".9"/></svg>
<div style="left:1701px;top:816px;width:214px;height:3px;background:#333"></div>
<div style="left:1701px;top:819px;width:214px;height:17px;background:linear-gradient(#9a9a9a,#8a8a8a);border-top:1px solid #6a6a6a"></div>
<div style="left:1754px;top:820px;width:1px;height:16px;background:#6e6e6e"></div>
<div style="left:1755px;top:820px;width:1px;height:16px;background:#a8a8a8"></div>
<div class="tab" style="left:1708px;top:820.5px;color:#2c2c2c">Aussehen</div>
<div style="left:1800px;top:820px;width:1px;height:16px;background:#6e6e6e"></div>
<div style="left:1801px;top:820px;width:1px;height:16px;background:#a8a8a8"></div>
<div class="tab" style="left:1762px;top:820.5px;color:#2c2c2c">Verlauf</div>
<div style="left:1801px;top:819px;width:73px;height:18px;background:#d6d6d6;border-top:1px solid #f0f0f0;border-left:1px solid #eee;border-right:1px solid #777"></div>
<div class="tab" style="left:1813px;top:820.5px;color:#222">Transparenz</div>
<svg style="left:1805px;top:824px" width="5" height="8" viewBox="0 0 5 8"><path d="M0 3h5L2.500 0zM0 5h5L2.500 8z" fill="#222"/></svg>
<svg style="left:1898px;top:824px" width="13" height="8" viewBox="0 0 13 8"><path d="M0 1h3.500l-1.750 2.500z" fill="#222"/><path d="M4.500 .5h8M4.500 3h8M4.500 5.500h8" stroke="#222" stroke-width="1.200"/></svg>
<div style="left:1709px;top:842px;width:94px;height:17px;background:#fff;border:1px solid #c4c4c4"></div>
<div style="left:1784px;top:843px;width:18px;height:15px;background:#f4f4f4"></div>
<div class="t" style="left:1712px;top:844px;font-size:10px">Normal</div>
<svg style="left:1790px;top:849px" width="8" height="5"><path d="M0 0h8l-4 5z" fill="#111"/></svg>
<div class="t" style="left:1806px;top:844px;font-size:10px;font-weight:bold;color:#333">Deckkr.:</div>
<div style="left:1852px;top:842px;width:45px;height:17px;background:#fff;border:1px solid #c4c4c4"></div>
<div class="t" style="left:1857px;top:844px;font-size:10px">100</div>
<div style="left:1881px;top:843px;width:15px;height:15px;background:#e8e8e8;border-left:1px solid #ccc"></div>
<svg style="left:1886px;top:846px" width="5" height="8"><path d="M0 0v8l5-4z" fill="#333"/></svg>
<div class="t" style="left:1899px;top:844px;font-size:10px;font-weight:bold;color:#333">%</div>
<div style="left:1706px;top:864px;width:202px;height:1px;background:#c0c0c0"></div>
<div style="left:1706px;top:865px;width:202px;height:1px;background:#eaeaea"></div>
<div style="left:1708px;top:871px;width:119px;height:56px;background:#d4d4d4;border:1px solid #c2c2c2;border-right-color:#ececec;border-bottom-color:#ececec"></div>
<svg style="left:1710px;top:874px" width="51" height="51" viewBox="0 0 51 51"><rect x=".5" y=".5" width="50" height="50" fill="#fff" stroke="#111"/><path d="M25.800 2.300L3.500 26.600h44z" fill="#acbe28"/><rect x="4.800" y="26.600" width="41" height="22" fill="#acbe28"/><path d="M7.500 26.500L25 7M11.500 26.500L27.500 8.800M8 27v21.500M12.500 27v21.500M37.600 27v21.500M3.500 27h44" stroke="#fbfde8" stroke-width="1.100" fill="none"/></svg>
<div style="left:1834px;top:885px;width:12px;height:12px;background:linear-gradient(135deg,#f4f4f4,#e0e0e0);border:1px solid #c8c8c8"></div>
<div class="t" style="left:1849px;top:884px;font-size:10px;color:#8a8a8a">Maskieren</div>
<div style="left:1834px;top:902px;width:12px;height:12px;background:linear-gradient(135deg,#f4f4f4,#e0e0e0);border:1px solid #c8c8c8"></div>
<div class="t" style="left:1849px;top:901px;font-size:10px;color:#8a8a8a">Umkehren</div>
<div style="left:1701px;top:934px;width:214px;height:3px;background:#333"></div>
<div style="left:1701px;top:937px;width:214px;height:17px;background:linear-gradient(#9a9a9a,#8a8a8a);border-top:1px solid #6a6a6a"></div>
<div style="left:1764px;top:938px;width:1px;height:16px;background:#6e6e6e"></div>
<div style="left:1765px;top:938px;width:1px;height:16px;background:#a8a8a8"></div>
<div class="tab" style="left:1708px;top:938.5px;color:#2c2c2c">Ausrichten</div>
<div style="left:1765px;top:937px;width:64px;height:18px;background:#d6d6d6;border-top:1px solid #f0f0f0;border-left:1px solid #eee;border-right:1px solid #777"></div>
<div class="tab" style="left:1772px;top:938.5px;color:#222">Pathfinder</div>
<svg style="left:1898px;top:942px" width="13" height="8" viewBox="0 0 13 8"><path d="M0 1h3.500l-1.750 2.500z" fill="#222"/><path d="M4.500 .5h8M4.500 3h8M4.500 5.500h8" stroke="#222" stroke-width="1.200"/></svg>
<div class="t" style="left:1707px;top:957px;font-size:10px">Formmodi:</div>
<svg style="left:1712px;top:973px" width="17" height="16" viewBox="0 0 17 16"><rect x="1.5" y="1.5" width="8" height="8" fill="#e4e4e4"/><path d="M1.5 9.5V1.5H9.5" fill="none" stroke="#b8b8b8" stroke-width="1"/><path d="M9.5 1.5V9.5H1.5" fill="none" stroke="#111" stroke-width="1.400"/><rect x="5.5" y="5.5" width="8" height="8" fill="#dcdcdc"/><path d="M5.5 13.5V5.5H13.5" fill="none" stroke="#b8b8b8" stroke-width="1"/><path d="M13.5 5.5V13.5H5.5" fill="none" stroke="#111" stroke-width="1.400"/></svg>
<svg style="left:1744px;top:973px" width="17" height="16" viewBox="0 0 17 16"><rect x="5.5" y="5.5" width="8" height="8" fill="#e2e2e2"/><path d="M5.5 13.5V5.5H13.5" fill="none" stroke="#ccc" stroke-width="1"/><path d="M13.5 5.5V13.5H5.5" fill="none" stroke="#bbb" stroke-width="1.400"/><path d="M1.500 1.500h8v4h-4v4h-4z" fill="#c8c8c8"/><path d="M1.500 9.500v-8h8" fill="none" stroke="#777"/><path d="M9.500 1.500v4h-4v4h-4" fill="none" stroke="#111" stroke-width="1.400"/></svg>
<svg style="left:1776px;top:973px" width="17" height="16" viewBox="0 0 17 16"><rect x="1.5" y="1.5" width="8" height="8" fill="#e4e4e4"/><path d="M1.5 9.5V1.5H9.5" fill="none" stroke="#bbb" stroke-width="1"/><path d="M9.5 1.5V9.5H1.5" fill="none" stroke="#999" stroke-width="1.400"/><rect x="5.5" y="5.5" width="8" height="8" fill="#e4e4e4"/><path d="M5.5 13.5V5.5H13.5" fill="none" stroke="#bbb" stroke-width="1"/><path d="M13.5 5.5V13.5H5.5" fill="none" stroke="#999" stroke-width="1.400"/><rect x="5" y="5" width="5" height="5" fill="#111"/></svg>
<svg style="left:1808px;top:973px" width="17" height="16" viewBox="0 0 17 16"><rect x="1.5" y="1.5" width="8" height="8" fill="#8a8a8a"/><path d="M1.5 9.5V1.5H9.5" fill="none" stroke="#b8b8b8" stroke-width="1"/><path d="M9.5 1.5V9.5H1.5" fill="none" stroke="#111" stroke-width="1.400"/><rect x="5.5" y="5.5" width="8" height="8" fill="#6a6a6a"/><path d="M5.5 13.5V5.5H13.5" fill="none" stroke="#b8b8b8" stroke-width="1"/><path d="M13.5 5.5V13.5H5.5" fill="none" stroke="#111" stroke-width="1.400"/><rect x="6" y="6" width="3.500" height="3.500" fill="#bbb"/></svg>
<div style="left:1836px;top:974px;width:69px;height:17px;background:#e6e6e6;border:1px solid #f8f8f8;border-radius:3px;box-shadow:0 0 0 1px #c4c4c4"></div>
<div class="t" style="left:1844px;top:976px;font-size:10px;color:#9a9a9a">Umwandeln</div>
<div class="t" style="left:1707px;top:995px;font-size:10px">Pathfinder:</div>
<svg style="left:1712px;top:1011px" width="17" height="16" viewBox="0 0 17 16"><rect x="1.5" y="1.5" width="5" height="5" fill="#f0f0f0"/><path d="M1.5 6.5V1.5H6.5" fill="none" stroke="#b8b8b8" stroke-width="1"/><path d="M6.5 1.5V6.5H1.5" fill="none" stroke="#111" stroke-width="1.400"/><rect x="4.5" y="4.5" width="5" height="5" fill="#f0f0f0"/><path d="M4.5 9.5V4.5H9.5" fill="none" stroke="#b8b8b8" stroke-width="1"/><path d="M9.5 4.5V9.5H4.5" fill="none" stroke="#111" stroke-width="1.400"/><circle cx="11" cy="10.5" r="4" fill="#e8e8e8" stroke="#bbb" stroke-width="1"/><path d="M13.8 7.7A4 4 0 0 1 8.2 13.3" fill="none" stroke="#222" stroke-width="1.400"/></svg>
<svg style="left:1744px;top:1011px" width="17" height="16" viewBox="0 0 17 16"><circle cx="10.5" cy="10" r="4.5" fill="#e8e8e8" stroke="#bbb" stroke-width="1"/><path d="M13.7 6.8A4.5 4.5 0 0 1 7.3 13.2" fill="none" stroke="#222" stroke-width="1.400"/><rect x="1.5" y="1.5" width="8" height="8" fill="#f0f0f0"/><path d="M1.5 9.5V1.5H9.5" fill="none" stroke="#b8b8b8" stroke-width="1"/><path d="M9.5 1.5V9.5H1.5" fill="none" stroke="#111" stroke-width="1.400"/><path d="M5.500 1.500v4h-4" fill="none" stroke="#999"/></svg>
<svg style="left:1776px;top:1011px" width="17" height="16" viewBox="0 0 17 16"><circle cx="10.5" cy="10" r="4.5" fill="#e8e8e8" stroke="#bbb" stroke-width="1"/><path d="M13.7 6.8A4.5 4.5 0 0 1 7.3 13.2" fill="none" stroke="#222" stroke-width="1.400"/><rect x="1.5" y="1.5" width="8" height="8" fill="#f0f0f0"/><path d="M1.5 9.5V1.5H9.5" fill="none" stroke="#b8b8b8" stroke-width="1"/><path d="M9.5 1.5V9.5H1.5" fill="none" stroke="#111" stroke-width="1.400"/></svg>
<svg style="left:1808px;top:1011px" width="17" height="16" viewBox="0 0 17 16"><circle cx="10.5" cy="10" r="4.5" fill="#e8e8e8" stroke="#bbb" stroke-width="1"/><path d="M13.7 6.8A4.5 4.5 0 0 1 7.3 13.2" fill="none" stroke="#222" stroke-width="1.400"/><rect x="1.5" y="1.5" width="8" height="8" fill="#f0f0f0"/><path d="M1.5 9.5V1.5H9.5" fill="none" stroke="#b8b8b8" stroke-width="1"/><path d="M9.5 1.5V9.5H1.5" fill="none" stroke="#111" stroke-width="1.400"/><rect x="5.500" y="5.500" width="4" height="4" fill="#555"/></svg>
<svg style="left:1840px;top:1011px" width="17" height="16" viewBox="0 0 17 16"><rect x="1.5" y="1.5" width="8" height="8" fill="#fff"/><path d="M1.5 9.5V1.5H9.5" fill="none" stroke="#b8b8b8" stroke-width="1"/><path d="M9.5 1.5V9.5H1.5" fill="none" stroke="#111" stroke-width="1.400"/><circle cx="10.5" cy="10.5" r="4.5" fill="#fff" stroke="#bbb" stroke-width="1"/><path d="M13.7 7.3A4.5 4.5 0 0 1 7.3 13.7" fill="none" stroke="#222" stroke-width="1.400"/><path d="M3 9l6-6" stroke="#222" stroke-width="1.200"/></svg>
<svg style="left:1872px;top:1011px" width="17" height="16" viewBox="0 0 17 16"><path d="M1.500 1.500h9v4.500a4 4 0 0 0-4.500 4.500h-4.500z" fill="#f4f4f4"/><path d="M1.500 10.500v-9h9" fill="none" stroke="#bbb"/><path d="M10.500 1.500v4.500a4 4 0 0 0-4.500 4.500h-4.500" fill="none" stroke="#111" stroke-width="1.400"/></svg></div></body></html>
